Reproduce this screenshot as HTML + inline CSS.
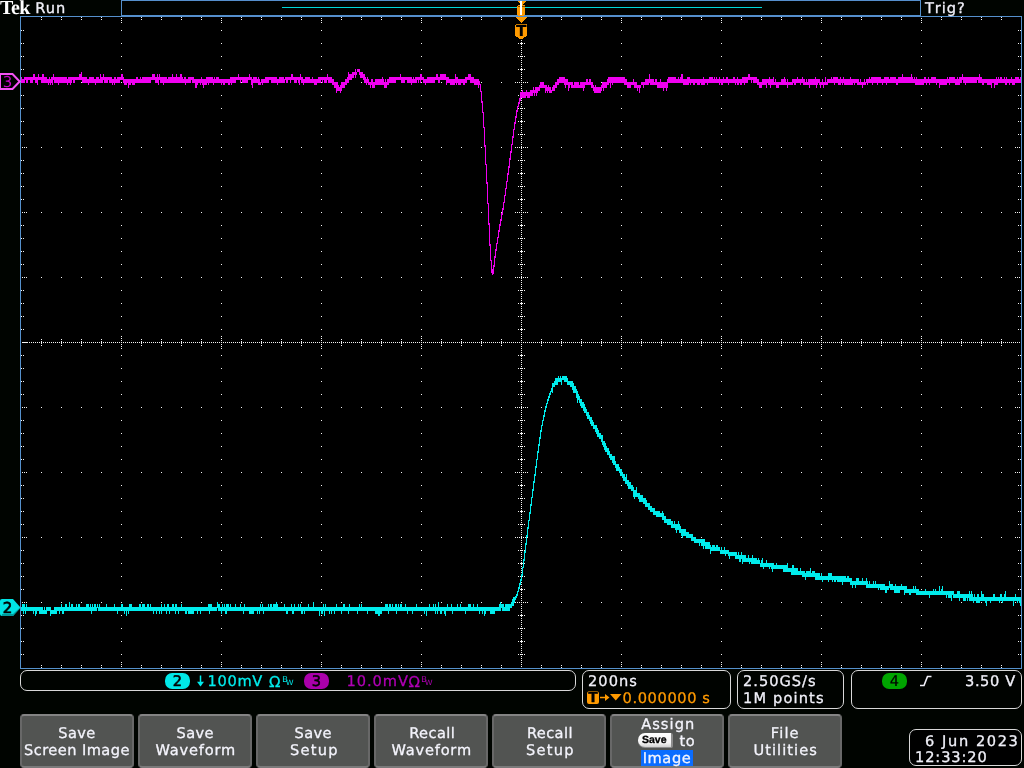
<!DOCTYPE html><html><head><meta charset="utf-8"><title>Tek scope</title><style>
html,body{margin:0;padding:0;background:#000400;}
body{width:1024px;height:768px;position:relative;overflow:hidden;font-family:"DejaVu Sans","Liberation Sans",sans-serif;font-size:14.6px;color:#f0f0f8;text-rendering:geometricPrecision;-webkit-text-stroke:.3px;}
.t{position:absolute;white-space:nowrap;line-height:18px;height:18px;margin-top:1px}
.box{position:absolute;border:1px solid #d8d8d8;border-radius:7px;box-sizing:border-box;background:#000300;}
.btn{position:absolute;top:714px;width:114px;height:54px;box-sizing:border-box;background:#525452;border:2px solid #686868;border-top-color:#848484;border-bottom-color:#7a7a7a;border-radius:4px;text-align:center;line-height:17px;padding-top:9px;color:#f4f4fc;letter-spacing:.6px}
.pill{-webkit-text-stroke:.55px;position:absolute;height:16px;border-radius:7.2px;text-align:center;font-size:14.6px;line-height:17px;color:#000;}
.bw{-webkit-text-stroke:0;position:absolute;font-size:8.5px;line-height:8px;font-family:"Liberation Sans","DejaVu Sans",sans-serif}
</style></head><body>
<div id="scr" style="position:absolute;left:0;top:0;width:1024px;height:768px;will-change:transform">
<svg width="1024" height="768" viewBox="0 0 1024 768" style="position:absolute;left:0;top:0">
<g shape-rendering="crispEdges">
<rect x="21" y="17" width="1000" height="651" fill="#000"/>
<rect x="122" y="1" width="798" height="14" fill="#000300"/>
<path d="M121.5 0V16M920.5 0V16M121 .5H921M20 16.5H1022M121 15.5H921M20.5 16V669M1021.5 16V669M20 668.5H1022" stroke="#5590cc" stroke-width="1" fill="none"/>
<path d="M282 7.5H762" stroke="#00d8d8" stroke-width="1"/>
<path d="M21 30h1M21 43h1M21 56h1M21 69h1M21 95h1M21 108h1M21 121h1M21 134h1M21 160h1M21 173h1M21 186h1M21 199h1M21 225h1M21 238h1M21 251h1M21 264h1M21 290h1M21 303h1M21 316h1M21 329h1M21 355h1M21 368h1M21 381h1M21 394h1M21 420h1M21 433h1M21 446h1M21 459h1M21 485h1M21 498h1M21 511h1M21 524h1M21 550h1M21 563h1M21 576h1M21 589h1M21 615h1M21 628h1M21 641h1M21 654h1M22 82h1M22 147h1M22 212h1M22 277h1M22 342h1M22 407h1M22 472h1M22 537h1M22 602h1M23 30h1M23 43h1M23 56h1M23 69h1M23 95h1M23 108h1M23 121h1M23 134h1M23 160h1M23 173h1M23 186h1M23 199h1M23 225h1M23 238h1M23 251h1M23 264h1M23 290h1M23 303h1M23 316h1M23 329h1M23 342h1M23 355h1M23 368h1M23 381h1M23 394h1M23 420h1M23 433h1M23 446h1M23 459h1M23 485h1M23 498h1M23 511h1M23 524h1M23 550h1M23 563h1M23 576h1M23 589h1M23 615h1M23 628h1M23 641h1M23 654h1M24 82h1M24 147h1M24 212h1M24 277h1M24 342h1M24 407h1M24 472h1M24 537h1M24 602h1M25 342h1M26 82h1M26 147h1M26 212h1M26 277h1M26 342h1M26 407h1M26 472h1M26 537h1M26 602h1M27 342h1M29 342h1M31 342h1M33 342h1M35 342h1M37 342h1M39 342h1M41 17h1M41 19h1M41 82h1M41 147h1M41 212h1M41 277h1M41 339h1M41 341h1M41 342h1M41 343h1M41 345h1M41 407h1M41 472h1M41 537h1M41 602h1M41 665h1M41 667h1M43 342h1M45 342h1M47 342h1M49 342h1M51 342h1M53 342h1M55 342h1M57 342h1M59 342h1M61 17h1M61 19h1M61 82h1M61 147h1M61 212h1M61 277h1M61 339h1M61 341h1M61 342h1M61 343h1M61 345h1M61 407h1M61 472h1M61 537h1M61 602h1M61 665h1M61 667h1M63 342h1M65 342h1M67 342h1M69 342h1M71 342h1M73 342h1M75 342h1M77 342h1M79 342h1M81 17h1M81 19h1M81 82h1M81 147h1M81 212h1M81 277h1M81 339h1M81 341h1M81 342h1M81 343h1M81 345h1M81 407h1M81 472h1M81 537h1M81 602h1M81 665h1M81 667h1M83 342h1M85 342h1M87 342h1M89 342h1M91 342h1M93 342h1M95 342h1M97 342h1M99 342h1M101 17h1M101 19h1M101 82h1M101 147h1M101 212h1M101 277h1M101 339h1M101 341h1M101 342h1M101 343h1M101 345h1M101 407h1M101 472h1M101 537h1M101 602h1M101 665h1M101 667h1M103 342h1M105 342h1M107 342h1M109 342h1M111 342h1M113 342h1M115 342h1M117 342h1M119 342h1M121 18h1M121 20h1M121 22h1M121 30h1M121 43h1M121 56h1M121 69h1M121 82h1M121 95h1M121 108h1M121 121h1M121 134h1M121 147h1M121 160h1M121 173h1M121 186h1M121 199h1M121 212h1M121 225h1M121 238h1M121 251h1M121 264h1M121 277h1M121 290h1M121 303h1M121 316h1M121 329h1M121 336h1M121 338h1M121 340h1M121 342h1M121 344h1M121 346h1M121 348h1M121 355h1M121 368h1M121 381h1M121 394h1M121 407h1M121 420h1M121 433h1M121 446h1M121 459h1M121 472h1M121 485h1M121 498h1M121 511h1M121 524h1M121 537h1M121 550h1M121 563h1M121 576h1M121 589h1M121 602h1M121 615h1M121 628h1M121 641h1M121 654h1M121 662h1M121 664h1M121 666h1M123 342h1M125 342h1M127 342h1M129 342h1M131 342h1M133 342h1M135 342h1M137 342h1M139 342h1M141 17h1M141 19h1M141 82h1M141 147h1M141 212h1M141 277h1M141 339h1M141 341h1M141 342h1M141 343h1M141 345h1M141 407h1M141 472h1M141 537h1M141 602h1M141 665h1M141 667h1M143 342h1M145 342h1M147 342h1M149 342h1M151 342h1M153 342h1M155 342h1M157 342h1M159 342h1M161 17h1M161 19h1M161 82h1M161 147h1M161 212h1M161 277h1M161 339h1M161 341h1M161 342h1M161 343h1M161 345h1M161 407h1M161 472h1M161 537h1M161 602h1M161 665h1M161 667h1M163 342h1M165 342h1M167 342h1M169 342h1M171 342h1M173 342h1M175 342h1M177 342h1M179 342h1M181 17h1M181 19h1M181 82h1M181 147h1M181 212h1M181 277h1M181 339h1M181 341h1M181 342h1M181 343h1M181 345h1M181 407h1M181 472h1M181 537h1M181 602h1M181 665h1M181 667h1M183 342h1M185 342h1M187 342h1M189 342h1M191 342h1M193 342h1M195 342h1M197 342h1M199 342h1M201 17h1M201 19h1M201 82h1M201 147h1M201 212h1M201 277h1M201 339h1M201 341h1M201 342h1M201 343h1M201 345h1M201 407h1M201 472h1M201 537h1M201 602h1M201 665h1M201 667h1M203 342h1M205 342h1M207 342h1M209 342h1M211 342h1M213 342h1M215 342h1M217 342h1M219 342h1M221 18h1M221 20h1M221 22h1M221 30h1M221 43h1M221 56h1M221 69h1M221 82h1M221 95h1M221 108h1M221 121h1M221 134h1M221 147h1M221 160h1M221 173h1M221 186h1M221 199h1M221 212h1M221 225h1M221 238h1M221 251h1M221 264h1M221 277h1M221 290h1M221 303h1M221 316h1M221 329h1M221 336h1M221 338h1M221 340h1M221 342h1M221 344h1M221 346h1M221 348h1M221 355h1M221 368h1M221 381h1M221 394h1M221 407h1M221 420h1M221 433h1M221 446h1M221 459h1M221 472h1M221 485h1M221 498h1M221 511h1M221 524h1M221 537h1M221 550h1M221 563h1M221 576h1M221 589h1M221 602h1M221 615h1M221 628h1M221 641h1M221 654h1M221 662h1M221 664h1M221 666h1M223 342h1M225 342h1M227 342h1M229 342h1M231 342h1M233 342h1M235 342h1M237 342h1M239 342h1M241 17h1M241 19h1M241 82h1M241 147h1M241 212h1M241 277h1M241 339h1M241 341h1M241 342h1M241 343h1M241 345h1M241 407h1M241 472h1M241 537h1M241 602h1M241 665h1M241 667h1M243 342h1M245 342h1M247 342h1M249 342h1M251 342h1M253 342h1M255 342h1M257 342h1M259 342h1M261 17h1M261 19h1M261 82h1M261 147h1M261 212h1M261 277h1M261 339h1M261 341h1M261 342h1M261 343h1M261 345h1M261 407h1M261 472h1M261 537h1M261 602h1M261 665h1M261 667h1M263 342h1M265 342h1M267 342h1M269 342h1M271 342h1M273 342h1M275 342h1M277 342h1M279 342h1M281 17h1M281 19h1M281 82h1M281 147h1M281 212h1M281 277h1M281 339h1M281 341h1M281 342h1M281 343h1M281 345h1M281 407h1M281 472h1M281 537h1M281 602h1M281 665h1M281 667h1M283 342h1M285 342h1M287 342h1M289 342h1M291 342h1M293 342h1M295 342h1M297 342h1M299 342h1M301 17h1M301 19h1M301 82h1M301 147h1M301 212h1M301 277h1M301 339h1M301 341h1M301 342h1M301 343h1M301 345h1M301 407h1M301 472h1M301 537h1M301 602h1M301 665h1M301 667h1M303 342h1M305 342h1M307 342h1M309 342h1M311 342h1M313 342h1M315 342h1M317 342h1M319 342h1M321 18h1M321 20h1M321 22h1M321 30h1M321 43h1M321 56h1M321 69h1M321 82h1M321 95h1M321 108h1M321 121h1M321 134h1M321 147h1M321 160h1M321 173h1M321 186h1M321 199h1M321 212h1M321 225h1M321 238h1M321 251h1M321 264h1M321 277h1M321 290h1M321 303h1M321 316h1M321 329h1M321 336h1M321 338h1M321 340h1M321 342h1M321 344h1M321 346h1M321 348h1M321 355h1M321 368h1M321 381h1M321 394h1M321 407h1M321 420h1M321 433h1M321 446h1M321 459h1M321 472h1M321 485h1M321 498h1M321 511h1M321 524h1M321 537h1M321 550h1M321 563h1M321 576h1M321 589h1M321 602h1M321 615h1M321 628h1M321 641h1M321 654h1M321 662h1M321 664h1M321 666h1M323 342h1M325 342h1M327 342h1M329 342h1M331 342h1M333 342h1M335 342h1M337 342h1M339 342h1M341 17h1M341 19h1M341 82h1M341 147h1M341 212h1M341 277h1M341 339h1M341 341h1M341 342h1M341 343h1M341 345h1M341 407h1M341 472h1M341 537h1M341 602h1M341 665h1M341 667h1M343 342h1M345 342h1M347 342h1M349 342h1M351 342h1M353 342h1M355 342h1M357 342h1M359 342h1M361 17h1M361 19h1M361 82h1M361 147h1M361 212h1M361 277h1M361 339h1M361 341h1M361 342h1M361 343h1M361 345h1M361 407h1M361 472h1M361 537h1M361 602h1M361 665h1M361 667h1M363 342h1M365 342h1M367 342h1M369 342h1M371 342h1M373 342h1M375 342h1M377 342h1M379 342h1M381 17h1M381 19h1M381 82h1M381 147h1M381 212h1M381 277h1M381 339h1M381 341h1M381 342h1M381 343h1M381 345h1M381 407h1M381 472h1M381 537h1M381 602h1M381 665h1M381 667h1M383 342h1M385 342h1M387 342h1M389 342h1M391 342h1M393 342h1M395 342h1M397 342h1M399 342h1M401 17h1M401 19h1M401 82h1M401 147h1M401 212h1M401 277h1M401 339h1M401 341h1M401 342h1M401 343h1M401 345h1M401 407h1M401 472h1M401 537h1M401 602h1M401 665h1M401 667h1M403 342h1M405 342h1M407 342h1M409 342h1M411 342h1M413 342h1M415 342h1M417 342h1M419 342h1M421 18h1M421 20h1M421 22h1M421 30h1M421 43h1M421 56h1M421 69h1M421 82h1M421 95h1M421 108h1M421 121h1M421 134h1M421 147h1M421 160h1M421 173h1M421 186h1M421 199h1M421 212h1M421 225h1M421 238h1M421 251h1M421 264h1M421 277h1M421 290h1M421 303h1M421 316h1M421 329h1M421 336h1M421 338h1M421 340h1M421 342h1M421 344h1M421 346h1M421 348h1M421 355h1M421 368h1M421 381h1M421 394h1M421 407h1M421 420h1M421 433h1M421 446h1M421 459h1M421 472h1M421 485h1M421 498h1M421 511h1M421 524h1M421 537h1M421 550h1M421 563h1M421 576h1M421 589h1M421 602h1M421 615h1M421 628h1M421 641h1M421 654h1M421 662h1M421 664h1M421 666h1M423 342h1M425 342h1M427 342h1M429 342h1M431 342h1M433 342h1M435 342h1M437 342h1M439 342h1M441 17h1M441 19h1M441 82h1M441 147h1M441 212h1M441 277h1M441 339h1M441 341h1M441 342h1M441 343h1M441 345h1M441 407h1M441 472h1M441 537h1M441 602h1M441 665h1M441 667h1M443 342h1M445 342h1M447 342h1M449 342h1M451 342h1M453 342h1M455 342h1M457 342h1M459 342h1M461 17h1M461 19h1M461 82h1M461 147h1M461 212h1M461 277h1M461 339h1M461 341h1M461 342h1M461 343h1M461 345h1M461 407h1M461 472h1M461 537h1M461 602h1M461 665h1M461 667h1M463 342h1M465 342h1M467 342h1M469 342h1M471 342h1M473 342h1M475 342h1M477 342h1M479 342h1M481 17h1M481 19h1M481 82h1M481 147h1M481 212h1M481 277h1M481 339h1M481 341h1M481 342h1M481 343h1M481 345h1M481 407h1M481 472h1M481 537h1M481 602h1M481 665h1M481 667h1M483 342h1M485 342h1M487 342h1M489 342h1M491 342h1M493 342h1M495 342h1M497 342h1M499 342h1M501 17h1M501 19h1M501 82h1M501 147h1M501 212h1M501 277h1M501 339h1M501 341h1M501 342h1M501 343h1M501 345h1M501 407h1M501 472h1M501 537h1M501 602h1M501 665h1M501 667h1M503 342h1M505 342h1M507 342h1M509 342h1M511 342h1M513 342h1M515 82h1M515 147h1M515 212h1M515 277h1M515 342h1M515 407h1M515 472h1M515 537h1M515 602h1M517 82h1M517 147h1M517 212h1M517 277h1M517 342h1M517 407h1M517 472h1M517 537h1M517 602h1M518 30h1M518 43h1M518 56h1M518 69h1M518 95h1M518 108h1M518 121h1M518 134h1M518 160h1M518 173h1M518 186h1M518 199h1M518 225h1M518 238h1M518 251h1M518 264h1M518 290h1M518 303h1M518 316h1M518 329h1M518 355h1M518 368h1M518 381h1M518 394h1M518 420h1M518 433h1M518 446h1M518 459h1M518 485h1M518 498h1M518 511h1M518 524h1M518 550h1M518 563h1M518 576h1M518 589h1M518 615h1M518 628h1M518 641h1M518 654h1M519 82h1M519 147h1M519 212h1M519 277h1M519 342h1M519 407h1M519 472h1M519 537h1M519 602h1M520 30h1M520 43h1M520 56h1M520 69h1M520 95h1M520 108h1M520 121h1M520 134h1M520 160h1M520 173h1M520 186h1M520 199h1M520 225h1M520 238h1M520 251h1M520 264h1M520 290h1M520 303h1M520 316h1M520 329h1M520 355h1M520 368h1M520 381h1M520 394h1M520 420h1M520 433h1M520 446h1M520 459h1M520 485h1M520 498h1M520 511h1M520 524h1M520 550h1M520 563h1M520 576h1M520 589h1M520 615h1M520 628h1M520 641h1M520 654h1M521 18h1M521 20h1M521 22h1M521 24h1M521 26h1M521 28h1M521 30h1M521 32h1M521 34h1M521 36h1M521 38h1M521 40h1M521 42h1M521 43h1M521 44h1M521 46h1M521 48h1M521 50h1M521 52h1M521 54h1M521 56h1M521 58h1M521 60h1M521 62h1M521 64h1M521 66h1M521 68h1M521 69h1M521 70h1M521 72h1M521 74h1M521 76h1M521 78h1M521 80h1M521 82h1M521 84h1M521 86h1M521 88h1M521 90h1M521 92h1M521 94h1M521 95h1M521 96h1M521 98h1M521 100h1M521 102h1M521 104h1M521 106h1M521 108h1M521 110h1M521 112h1M521 114h1M521 116h1M521 118h1M521 120h1M521 121h1M521 122h1M521 124h1M521 126h1M521 128h1M521 130h1M521 132h1M521 134h1M521 136h1M521 138h1M521 140h1M521 142h1M521 144h1M521 146h1M521 147h1M521 148h1M521 150h1M521 152h1M521 154h1M521 156h1M521 158h1M521 160h1M521 162h1M521 164h1M521 166h1M521 168h1M521 170h1M521 172h1M521 173h1M521 174h1M521 176h1M521 178h1M521 180h1M521 182h1M521 184h1M521 186h1M521 188h1M521 190h1M521 192h1M521 194h1M521 196h1M521 198h1M521 199h1M521 200h1M521 202h1M521 204h1M521 206h1M521 208h1M521 210h1M521 212h1M521 214h1M521 216h1M521 218h1M521 220h1M521 222h1M521 224h1M521 225h1M521 226h1M521 228h1M521 230h1M521 232h1M521 234h1M521 236h1M521 238h1M521 240h1M521 242h1M521 244h1M521 246h1M521 248h1M521 250h1M521 251h1M521 252h1M521 254h1M521 256h1M521 258h1M521 260h1M521 262h1M521 264h1M521 266h1M521 268h1M521 270h1M521 272h1M521 274h1M521 276h1M521 277h1M521 278h1M521 280h1M521 282h1M521 284h1M521 286h1M521 288h1M521 290h1M521 292h1M521 294h1M521 296h1M521 298h1M521 300h1M521 302h1M521 303h1M521 304h1M521 306h1M521 308h1M521 310h1M521 312h1M521 314h1M521 316h1M521 318h1M521 320h1M521 322h1M521 324h1M521 326h1M521 328h1M521 329h1M521 330h1M521 332h1M521 334h1M521 336h1M521 338h1M521 340h1M521 342h1M521 344h1M521 346h1M521 348h1M521 350h1M521 352h1M521 354h1M521 355h1M521 356h1M521 358h1M521 360h1M521 362h1M521 364h1M521 366h1M521 368h1M521 370h1M521 372h1M521 374h1M521 376h1M521 378h1M521 380h1M521 381h1M521 382h1M521 384h1M521 386h1M521 388h1M521 390h1M521 392h1M521 394h1M521 396h1M521 398h1M521 400h1M521 402h1M521 404h1M521 406h1M521 407h1M521 408h1M521 410h1M521 412h1M521 414h1M521 416h1M521 418h1M521 420h1M521 422h1M521 424h1M521 426h1M521 428h1M521 430h1M521 432h1M521 433h1M521 434h1M521 436h1M521 438h1M521 440h1M521 442h1M521 444h1M521 446h1M521 448h1M521 450h1M521 452h1M521 454h1M521 456h1M521 458h1M521 459h1M521 460h1M521 462h1M521 464h1M521 466h1M521 468h1M521 470h1M521 472h1M521 474h1M521 476h1M521 478h1M521 480h1M521 482h1M521 484h1M521 485h1M521 486h1M521 488h1M521 490h1M521 492h1M521 494h1M521 496h1M521 498h1M521 500h1M521 502h1M521 504h1M521 506h1M521 508h1M521 510h1M521 511h1M521 512h1M521 514h1M521 516h1M521 518h1M521 520h1M521 522h1M521 524h1M521 526h1M521 528h1M521 530h1M521 532h1M521 534h1M521 536h1M521 537h1M521 538h1M521 540h1M521 542h1M521 544h1M521 546h1M521 548h1M521 550h1M521 552h1M521 554h1M521 556h1M521 558h1M521 560h1M521 562h1M521 563h1M521 564h1M521 566h1M521 568h1M521 570h1M521 572h1M521 574h1M521 576h1M521 578h1M521 580h1M521 582h1M521 584h1M521 586h1M521 588h1M521 589h1M521 590h1M521 592h1M521 594h1M521 596h1M521 598h1M521 600h1M521 602h1M521 604h1M521 606h1M521 608h1M521 610h1M521 612h1M521 614h1M521 615h1M521 616h1M521 618h1M521 620h1M521 622h1M521 624h1M521 626h1M521 628h1M521 630h1M521 632h1M521 634h1M521 636h1M521 638h1M521 640h1M521 641h1M521 642h1M521 644h1M521 646h1M521 648h1M521 650h1M521 652h1M521 654h1M521 656h1M521 658h1M521 660h1M521 662h1M521 664h1M521 666h1M522 30h1M522 43h1M522 56h1M522 69h1M522 95h1M522 108h1M522 121h1M522 134h1M522 160h1M522 173h1M522 186h1M522 199h1M522 225h1M522 238h1M522 251h1M522 264h1M522 290h1M522 303h1M522 316h1M522 329h1M522 355h1M522 368h1M522 381h1M522 394h1M522 420h1M522 433h1M522 446h1M522 459h1M522 485h1M522 498h1M522 511h1M522 524h1M522 550h1M522 563h1M522 576h1M522 589h1M522 615h1M522 628h1M522 641h1M522 654h1M523 82h1M523 147h1M523 212h1M523 277h1M523 342h1M523 407h1M523 472h1M523 537h1M523 602h1M524 30h1M524 43h1M524 56h1M524 69h1M524 95h1M524 108h1M524 121h1M524 134h1M524 160h1M524 173h1M524 186h1M524 199h1M524 225h1M524 238h1M524 251h1M524 264h1M524 290h1M524 303h1M524 316h1M524 329h1M524 355h1M524 368h1M524 381h1M524 394h1M524 420h1M524 433h1M524 446h1M524 459h1M524 485h1M524 498h1M524 511h1M524 524h1M524 550h1M524 563h1M524 576h1M524 589h1M524 615h1M524 628h1M524 641h1M524 654h1M525 82h1M525 147h1M525 212h1M525 277h1M525 342h1M525 407h1M525 472h1M525 537h1M525 602h1M527 82h1M527 147h1M527 212h1M527 277h1M527 342h1M527 407h1M527 472h1M527 537h1M527 602h1M529 342h1M531 342h1M533 342h1M535 342h1M537 342h1M539 342h1M541 17h1M541 19h1M541 82h1M541 147h1M541 212h1M541 277h1M541 339h1M541 341h1M541 342h1M541 343h1M541 345h1M541 407h1M541 472h1M541 537h1M541 602h1M541 665h1M541 667h1M543 342h1M545 342h1M547 342h1M549 342h1M551 342h1M553 342h1M555 342h1M557 342h1M559 342h1M561 17h1M561 19h1M561 82h1M561 147h1M561 212h1M561 277h1M561 339h1M561 341h1M561 342h1M561 343h1M561 345h1M561 407h1M561 472h1M561 537h1M561 602h1M561 665h1M561 667h1M563 342h1M565 342h1M567 342h1M569 342h1M571 342h1M573 342h1M575 342h1M577 342h1M579 342h1M581 17h1M581 19h1M581 82h1M581 147h1M581 212h1M581 277h1M581 339h1M581 341h1M581 342h1M581 343h1M581 345h1M581 407h1M581 472h1M581 537h1M581 602h1M581 665h1M581 667h1M583 342h1M585 342h1M587 342h1M589 342h1M591 342h1M593 342h1M595 342h1M597 342h1M599 342h1M601 17h1M601 19h1M601 82h1M601 147h1M601 212h1M601 277h1M601 339h1M601 341h1M601 342h1M601 343h1M601 345h1M601 407h1M601 472h1M601 537h1M601 602h1M601 665h1M601 667h1M603 342h1M605 342h1M607 342h1M609 342h1M611 342h1M613 342h1M615 342h1M617 342h1M619 342h1M621 18h1M621 20h1M621 22h1M621 30h1M621 43h1M621 56h1M621 69h1M621 82h1M621 95h1M621 108h1M621 121h1M621 134h1M621 147h1M621 160h1M621 173h1M621 186h1M621 199h1M621 212h1M621 225h1M621 238h1M621 251h1M621 264h1M621 277h1M621 290h1M621 303h1M621 316h1M621 329h1M621 336h1M621 338h1M621 340h1M621 342h1M621 344h1M621 346h1M621 348h1M621 355h1M621 368h1M621 381h1M621 394h1M621 407h1M621 420h1M621 433h1M621 446h1M621 459h1M621 472h1M621 485h1M621 498h1M621 511h1M621 524h1M621 537h1M621 550h1M621 563h1M621 576h1M621 589h1M621 602h1M621 615h1M621 628h1M621 641h1M621 654h1M621 662h1M621 664h1M621 666h1M623 342h1M625 342h1M627 342h1M629 342h1M631 342h1M633 342h1M635 342h1M637 342h1M639 342h1M641 17h1M641 19h1M641 82h1M641 147h1M641 212h1M641 277h1M641 339h1M641 341h1M641 342h1M641 343h1M641 345h1M641 407h1M641 472h1M641 537h1M641 602h1M641 665h1M641 667h1M643 342h1M645 342h1M647 342h1M649 342h1M651 342h1M653 342h1M655 342h1M657 342h1M659 342h1M661 17h1M661 19h1M661 82h1M661 147h1M661 212h1M661 277h1M661 339h1M661 341h1M661 342h1M661 343h1M661 345h1M661 407h1M661 472h1M661 537h1M661 602h1M661 665h1M661 667h1M663 342h1M665 342h1M667 342h1M669 342h1M671 342h1M673 342h1M675 342h1M677 342h1M679 342h1M681 17h1M681 19h1M681 82h1M681 147h1M681 212h1M681 277h1M681 339h1M681 341h1M681 342h1M681 343h1M681 345h1M681 407h1M681 472h1M681 537h1M681 602h1M681 665h1M681 667h1M683 342h1M685 342h1M687 342h1M689 342h1M691 342h1M693 342h1M695 342h1M697 342h1M699 342h1M701 17h1M701 19h1M701 82h1M701 147h1M701 212h1M701 277h1M701 339h1M701 341h1M701 342h1M701 343h1M701 345h1M701 407h1M701 472h1M701 537h1M701 602h1M701 665h1M701 667h1M703 342h1M705 342h1M707 342h1M709 342h1M711 342h1M713 342h1M715 342h1M717 342h1M719 342h1M721 18h1M721 20h1M721 22h1M721 30h1M721 43h1M721 56h1M721 69h1M721 82h1M721 95h1M721 108h1M721 121h1M721 134h1M721 147h1M721 160h1M721 173h1M721 186h1M721 199h1M721 212h1M721 225h1M721 238h1M721 251h1M721 264h1M721 277h1M721 290h1M721 303h1M721 316h1M721 329h1M721 336h1M721 338h1M721 340h1M721 342h1M721 344h1M721 346h1M721 348h1M721 355h1M721 368h1M721 381h1M721 394h1M721 407h1M721 420h1M721 433h1M721 446h1M721 459h1M721 472h1M721 485h1M721 498h1M721 511h1M721 524h1M721 537h1M721 550h1M721 563h1M721 576h1M721 589h1M721 602h1M721 615h1M721 628h1M721 641h1M721 654h1M721 662h1M721 664h1M721 666h1M723 342h1M725 342h1M727 342h1M729 342h1M731 342h1M733 342h1M735 342h1M737 342h1M739 342h1M741 17h1M741 19h1M741 82h1M741 147h1M741 212h1M741 277h1M741 339h1M741 341h1M741 342h1M741 343h1M741 345h1M741 407h1M741 472h1M741 537h1M741 602h1M741 665h1M741 667h1M743 342h1M745 342h1M747 342h1M749 342h1M751 342h1M753 342h1M755 342h1M757 342h1M759 342h1M761 17h1M761 19h1M761 82h1M761 147h1M761 212h1M761 277h1M761 339h1M761 341h1M761 342h1M761 343h1M761 345h1M761 407h1M761 472h1M761 537h1M761 602h1M761 665h1M761 667h1M763 342h1M765 342h1M767 342h1M769 342h1M771 342h1M773 342h1M775 342h1M777 342h1M779 342h1M781 17h1M781 19h1M781 82h1M781 147h1M781 212h1M781 277h1M781 339h1M781 341h1M781 342h1M781 343h1M781 345h1M781 407h1M781 472h1M781 537h1M781 602h1M781 665h1M781 667h1M783 342h1M785 342h1M787 342h1M789 342h1M791 342h1M793 342h1M795 342h1M797 342h1M799 342h1M801 17h1M801 19h1M801 82h1M801 147h1M801 212h1M801 277h1M801 339h1M801 341h1M801 342h1M801 343h1M801 345h1M801 407h1M801 472h1M801 537h1M801 602h1M801 665h1M801 667h1M803 342h1M805 342h1M807 342h1M809 342h1M811 342h1M813 342h1M815 342h1M817 342h1M819 342h1M821 18h1M821 20h1M821 22h1M821 30h1M821 43h1M821 56h1M821 69h1M821 82h1M821 95h1M821 108h1M821 121h1M821 134h1M821 147h1M821 160h1M821 173h1M821 186h1M821 199h1M821 212h1M821 225h1M821 238h1M821 251h1M821 264h1M821 277h1M821 290h1M821 303h1M821 316h1M821 329h1M821 336h1M821 338h1M821 340h1M821 342h1M821 344h1M821 346h1M821 348h1M821 355h1M821 368h1M821 381h1M821 394h1M821 407h1M821 420h1M821 433h1M821 446h1M821 459h1M821 472h1M821 485h1M821 498h1M821 511h1M821 524h1M821 537h1M821 550h1M821 563h1M821 576h1M821 589h1M821 602h1M821 615h1M821 628h1M821 641h1M821 654h1M821 662h1M821 664h1M821 666h1M823 342h1M825 342h1M827 342h1M829 342h1M831 342h1M833 342h1M835 342h1M837 342h1M839 342h1M841 17h1M841 19h1M841 82h1M841 147h1M841 212h1M841 277h1M841 339h1M841 341h1M841 342h1M841 343h1M841 345h1M841 407h1M841 472h1M841 537h1M841 602h1M841 665h1M841 667h1M843 342h1M845 342h1M847 342h1M849 342h1M851 342h1M853 342h1M855 342h1M857 342h1M859 342h1M861 17h1M861 19h1M861 82h1M861 147h1M861 212h1M861 277h1M861 339h1M861 341h1M861 342h1M861 343h1M861 345h1M861 407h1M861 472h1M861 537h1M861 602h1M861 665h1M861 667h1M863 342h1M865 342h1M867 342h1M869 342h1M871 342h1M873 342h1M875 342h1M877 342h1M879 342h1M881 17h1M881 19h1M881 82h1M881 147h1M881 212h1M881 277h1M881 339h1M881 341h1M881 342h1M881 343h1M881 345h1M881 407h1M881 472h1M881 537h1M881 602h1M881 665h1M881 667h1M883 342h1M885 342h1M887 342h1M889 342h1M891 342h1M893 342h1M895 342h1M897 342h1M899 342h1M901 17h1M901 19h1M901 82h1M901 147h1M901 212h1M901 277h1M901 339h1M901 341h1M901 342h1M901 343h1M901 345h1M901 407h1M901 472h1M901 537h1M901 602h1M901 665h1M901 667h1M903 342h1M905 342h1M907 342h1M909 342h1M911 342h1M913 342h1M915 342h1M917 342h1M919 342h1M921 18h1M921 20h1M921 22h1M921 30h1M921 43h1M921 56h1M921 69h1M921 82h1M921 95h1M921 108h1M921 121h1M921 134h1M921 147h1M921 160h1M921 173h1M921 186h1M921 199h1M921 212h1M921 225h1M921 238h1M921 251h1M921 264h1M921 277h1M921 290h1M921 303h1M921 316h1M921 329h1M921 336h1M921 338h1M921 340h1M921 342h1M921 344h1M921 346h1M921 348h1M921 355h1M921 368h1M921 381h1M921 394h1M921 407h1M921 420h1M921 433h1M921 446h1M921 459h1M921 472h1M921 485h1M921 498h1M921 511h1M921 524h1M921 537h1M921 550h1M921 563h1M921 576h1M921 589h1M921 602h1M921 615h1M921 628h1M921 641h1M921 654h1M921 662h1M921 664h1M921 666h1M923 342h1M925 342h1M927 342h1M929 342h1M931 342h1M933 342h1M935 342h1M937 342h1M939 342h1M941 17h1M941 19h1M941 82h1M941 147h1M941 212h1M941 277h1M941 339h1M941 341h1M941 342h1M941 343h1M941 345h1M941 407h1M941 472h1M941 537h1M941 602h1M941 665h1M941 667h1M943 342h1M945 342h1M947 342h1M949 342h1M951 342h1M953 342h1M955 342h1M957 342h1M959 342h1M961 17h1M961 19h1M961 82h1M961 147h1M961 212h1M961 277h1M961 339h1M961 341h1M961 342h1M961 343h1M961 345h1M961 407h1M961 472h1M961 537h1M961 602h1M961 665h1M961 667h1M963 342h1M965 342h1M967 342h1M969 342h1M971 342h1M973 342h1M975 342h1M977 342h1M979 342h1M981 17h1M981 19h1M981 82h1M981 147h1M981 212h1M981 277h1M981 339h1M981 341h1M981 342h1M981 343h1M981 345h1M981 407h1M981 472h1M981 537h1M981 602h1M981 665h1M981 667h1M983 342h1M985 342h1M987 342h1M989 342h1M991 342h1M993 342h1M995 342h1M997 342h1M999 342h1M1001 17h1M1001 19h1M1001 82h1M1001 147h1M1001 212h1M1001 277h1M1001 339h1M1001 341h1M1001 342h1M1001 343h1M1001 345h1M1001 407h1M1001 472h1M1001 537h1M1001 602h1M1001 665h1M1001 667h1M1003 342h1M1005 342h1M1007 342h1M1009 342h1M1011 342h1M1013 342h1M1015 82h1M1015 147h1M1015 212h1M1015 277h1M1015 342h1M1015 407h1M1015 472h1M1015 537h1M1015 602h1M1017 82h1M1017 147h1M1017 212h1M1017 277h1M1017 342h1M1017 407h1M1017 472h1M1017 537h1M1017 602h1M1018 30h1M1018 43h1M1018 56h1M1018 69h1M1018 95h1M1018 108h1M1018 121h1M1018 134h1M1018 160h1M1018 173h1M1018 186h1M1018 199h1M1018 225h1M1018 238h1M1018 251h1M1018 264h1M1018 290h1M1018 303h1M1018 316h1M1018 329h1M1018 355h1M1018 368h1M1018 381h1M1018 394h1M1018 420h1M1018 433h1M1018 446h1M1018 459h1M1018 485h1M1018 498h1M1018 511h1M1018 524h1M1018 550h1M1018 563h1M1018 576h1M1018 589h1M1018 615h1M1018 628h1M1018 641h1M1018 654h1M1019 82h1M1019 147h1M1019 212h1M1019 277h1M1019 342h1M1019 407h1M1019 472h1M1019 537h1M1019 602h1M1020 30h1M1020 43h1M1020 56h1M1020 69h1M1020 95h1M1020 108h1M1020 121h1M1020 134h1M1020 160h1M1020 173h1M1020 186h1M1020 199h1M1020 225h1M1020 238h1M1020 251h1M1020 264h1M1020 290h1M1020 303h1M1020 316h1M1020 329h1M1020 355h1M1020 368h1M1020 381h1M1020 394h1M1020 420h1M1020 433h1M1020 446h1M1020 459h1M1020 485h1M1020 498h1M1020 511h1M1020 524h1M1020 550h1M1020 563h1M1020 576h1M1020 589h1M1020 615h1M1020 628h1M1020 641h1M1020 654h1" stroke="#f4f4f4" stroke-width="1" fill="none" transform="translate(0,0.5)"/>
<path d="M21 77h1v6h-1zM22 79h1v4h-1zM23 79h1v4h-1zM24 77h1v6h-1zM25 77h1v3h-1zM26 77h1v6h-1zM27 77h1v6h-1zM28 77h1v3h-1zM29 77h1v3h-1zM30 77h1v6h-1zM31 77h1v6h-1zM32 77h1v6h-1zM33 74h1v6h-1zM34 74h1v6h-1zM35 77h1v6h-1zM36 77h1v6h-1zM37 77h1v8h-1zM38 74h1v6h-1zM39 77h1v3h-1zM40 77h1v3h-1zM41 77h1v6h-1zM42 74h1v9h-1zM43 74h1v9h-1zM44 77h1v6h-1zM45 77h1v6h-1zM46 77h1v6h-1zM47 79h1v4h-1zM48 79h1v6h-1zM49 77h1v6h-1zM50 79h1v6h-1zM51 77h1v6h-1zM52 77h1v8h-1zM53 74h1v6h-1zM54 77h1v6h-1zM55 77h1v6h-1zM56 77h1v6h-1zM57 77h1v6h-1zM58 77h1v8h-1zM59 77h1v6h-1zM60 77h1v6h-1zM61 77h1v6h-1zM62 77h1v6h-1zM63 77h1v6h-1zM64 77h1v6h-1zM65 77h1v6h-1zM66 77h1v6h-1zM67 79h1v6h-1zM68 77h1v6h-1zM69 77h1v6h-1zM70 77h1v8h-1zM71 77h1v6h-1zM72 77h1v3h-1zM73 77h1v6h-1zM74 77h1v6h-1zM75 77h1v3h-1zM76 77h1v3h-1zM77 77h1v3h-1zM78 77h1v3h-1zM79 74h1v6h-1zM80 74h1v6h-1zM81 72h1v8h-1zM82 77h1v6h-1zM83 77h1v6h-1zM84 77h1v6h-1zM85 77h1v6h-1zM86 77h1v6h-1zM87 79h1v4h-1zM88 79h1v6h-1zM89 77h1v6h-1zM90 77h1v6h-1zM91 77h1v6h-1zM92 77h1v6h-1zM93 77h1v6h-1zM94 79h1v4h-1zM95 79h1v6h-1zM96 77h1v6h-1zM97 77h1v6h-1zM98 77h1v6h-1zM99 79h1v4h-1zM100 74h1v9h-1zM101 77h1v6h-1zM102 77h1v6h-1zM103 74h1v6h-1zM104 77h1v6h-1zM105 77h1v6h-1zM106 77h1v6h-1zM107 77h1v6h-1zM108 77h1v3h-1zM109 77h1v6h-1zM110 77h1v6h-1zM111 77h1v6h-1zM112 79h1v6h-1zM113 79h1v4h-1zM114 77h1v8h-1zM115 77h1v6h-1zM116 79h1v4h-1zM117 77h1v6h-1zM118 77h1v6h-1zM119 77h1v6h-1zM120 77h1v3h-1zM121 74h1v6h-1zM122 74h1v6h-1zM123 77h1v6h-1zM124 79h1v6h-1zM125 79h1v6h-1zM126 79h1v6h-1zM127 79h1v4h-1zM128 79h1v9h-1zM129 79h1v6h-1zM130 79h1v6h-1zM131 79h1v4h-1zM132 79h1v6h-1zM133 79h1v6h-1zM134 79h1v6h-1zM135 79h1v4h-1zM136 77h1v6h-1zM137 77h1v6h-1zM138 79h1v4h-1zM139 79h1v4h-1zM140 77h1v6h-1zM141 79h1v4h-1zM142 77h1v6h-1zM143 77h1v6h-1zM144 77h1v6h-1zM145 77h1v6h-1zM146 77h1v6h-1zM147 77h1v6h-1zM148 77h1v6h-1zM149 77h1v6h-1zM150 77h1v6h-1zM151 77h1v3h-1zM152 74h1v6h-1zM153 74h1v6h-1zM154 74h1v6h-1zM155 77h1v6h-1zM156 77h1v6h-1zM157 74h1v9h-1zM158 77h1v8h-1zM159 74h1v6h-1zM160 77h1v6h-1zM161 77h1v6h-1zM162 77h1v6h-1zM163 77h1v8h-1zM164 77h1v6h-1zM165 77h1v6h-1zM166 77h1v6h-1zM167 79h1v4h-1zM168 77h1v6h-1zM169 77h1v6h-1zM170 77h1v6h-1zM171 77h1v6h-1zM172 74h1v9h-1zM173 77h1v6h-1zM174 77h1v6h-1zM175 77h1v6h-1zM176 74h1v9h-1zM177 77h1v6h-1zM178 77h1v6h-1zM179 77h1v6h-1zM180 74h1v9h-1zM181 74h1v9h-1zM182 77h1v6h-1zM183 79h1v4h-1zM184 77h1v6h-1zM185 77h1v8h-1zM186 79h1v4h-1zM187 79h1v4h-1zM188 77h1v6h-1zM189 77h1v6h-1zM190 77h1v6h-1zM191 77h1v3h-1zM192 77h1v6h-1zM193 77h1v6h-1zM194 79h1v4h-1zM195 79h1v9h-1zM196 79h1v9h-1zM197 79h1v6h-1zM198 79h1v4h-1zM199 79h1v4h-1zM200 79h1v6h-1zM201 77h1v6h-1zM202 79h1v6h-1zM203 79h1v9h-1zM204 79h1v6h-1zM205 79h1v6h-1zM206 77h1v8h-1zM207 77h1v6h-1zM208 77h1v8h-1zM209 77h1v6h-1zM210 77h1v6h-1zM211 77h1v6h-1zM212 77h1v6h-1zM213 79h1v6h-1zM214 77h1v6h-1zM215 79h1v4h-1zM216 77h1v6h-1zM217 77h1v6h-1zM218 77h1v6h-1zM219 79h1v4h-1zM220 79h1v4h-1zM221 79h1v6h-1zM222 79h1v4h-1zM223 79h1v6h-1zM224 79h1v6h-1zM225 79h1v4h-1zM226 79h1v4h-1zM227 79h1v4h-1zM228 79h1v6h-1zM229 79h1v6h-1zM230 77h1v6h-1zM231 77h1v8h-1zM232 77h1v6h-1zM233 77h1v6h-1zM234 77h1v6h-1zM235 77h1v6h-1zM236 77h1v3h-1zM237 77h1v3h-1zM238 74h1v6h-1zM239 77h1v3h-1zM240 77h1v6h-1zM241 77h1v3h-1zM242 77h1v6h-1zM243 77h1v6h-1zM244 77h1v6h-1zM245 77h1v6h-1zM246 77h1v6h-1zM247 77h1v6h-1zM248 77h1v3h-1zM249 74h1v6h-1zM250 77h1v3h-1zM251 77h1v8h-1zM252 79h1v9h-1zM253 77h1v6h-1zM254 77h1v6h-1zM255 77h1v6h-1zM256 77h1v6h-1zM257 79h1v4h-1zM258 77h1v8h-1zM259 79h1v6h-1zM260 82h1v3h-1zM261 79h1v4h-1zM262 79h1v6h-1zM263 79h1v4h-1zM264 79h1v4h-1zM265 77h1v6h-1zM266 77h1v6h-1zM267 77h1v6h-1zM268 77h1v6h-1zM269 77h1v3h-1zM270 77h1v3h-1zM271 77h1v6h-1zM272 77h1v6h-1zM273 77h1v6h-1zM274 77h1v6h-1zM275 77h1v6h-1zM276 77h1v6h-1zM277 79h1v6h-1zM278 79h1v4h-1zM279 77h1v6h-1zM280 77h1v6h-1zM281 77h1v6h-1zM282 77h1v6h-1zM283 77h1v6h-1zM284 79h1v4h-1zM285 77h1v3h-1zM286 77h1v6h-1zM287 77h1v6h-1zM288 77h1v3h-1zM289 77h1v3h-1zM290 77h1v6h-1zM291 74h1v6h-1zM292 74h1v6h-1zM293 77h1v3h-1zM294 77h1v6h-1zM295 77h1v6h-1zM296 77h1v6h-1zM297 77h1v3h-1zM298 77h1v6h-1zM299 77h1v8h-1zM300 74h1v6h-1zM301 77h1v6h-1zM302 77h1v6h-1zM303 79h1v6h-1zM304 79h1v4h-1zM305 77h1v6h-1zM306 77h1v6h-1zM307 77h1v6h-1zM308 77h1v6h-1zM309 77h1v6h-1zM310 79h1v4h-1zM311 79h1v4h-1zM312 77h1v6h-1zM313 79h1v4h-1zM314 79h1v6h-1zM315 79h1v6h-1zM316 79h1v6h-1zM317 79h1v4h-1zM318 77h1v6h-1zM319 77h1v6h-1zM320 77h1v6h-1zM321 77h1v3h-1zM322 77h1v6h-1zM323 77h1v3h-1zM324 77h1v6h-1zM325 77h1v6h-1zM326 77h1v6h-1zM327 74h1v6h-1zM328 77h1v6h-1zM329 77h1v6h-1zM330 77h1v6h-1zM331 77h1v6h-1zM332 79h1v6h-1zM333 79h1v6h-1zM334 82h1v6h-1zM335 82h1v6h-1zM336 82h1v11h-1zM337 82h1v9h-1zM338 85h1v6h-1zM339 87h1v4h-1zM340 85h1v8h-1zM341 82h1v9h-1zM342 82h1v6h-1zM343 82h1v6h-1zM344 82h1v6h-1zM345 79h1v6h-1zM346 79h1v6h-1zM347 77h1v6h-1zM348 72h1v11h-1zM349 74h1v6h-1zM350 74h1v6h-1zM351 74h1v6h-1zM352 72h1v6h-1zM353 72h1v6h-1zM354 72h1v3h-1zM355 69h1v9h-1zM356 72h1v3h-1zM357 69h1v3h-1zM358 69h1v3h-1zM359 69h1v6h-1zM360 72h1v6h-1zM361 72h1v6h-1zM362 72h1v6h-1zM363 74h1v6h-1zM364 74h1v9h-1zM365 77h1v6h-1zM366 79h1v6h-1zM367 77h1v6h-1zM368 79h1v6h-1zM369 82h1v3h-1zM370 82h1v6h-1zM371 79h1v6h-1zM372 79h1v9h-1zM373 82h1v6h-1zM374 82h1v6h-1zM375 79h1v6h-1zM376 79h1v6h-1zM377 79h1v6h-1zM378 79h1v6h-1zM379 79h1v6h-1zM380 79h1v6h-1zM381 79h1v6h-1zM382 77h1v8h-1zM383 79h1v6h-1zM384 82h1v6h-1zM385 79h1v9h-1zM386 82h1v6h-1zM387 79h1v6h-1zM388 79h1v6h-1zM389 77h1v6h-1zM390 77h1v6h-1zM391 77h1v6h-1zM392 77h1v6h-1zM393 77h1v6h-1zM394 77h1v6h-1zM395 77h1v6h-1zM396 77h1v3h-1zM397 77h1v3h-1zM398 77h1v3h-1zM399 77h1v3h-1zM400 74h1v6h-1zM401 77h1v6h-1zM402 77h1v6h-1zM403 77h1v6h-1zM404 77h1v6h-1zM405 77h1v3h-1zM406 77h1v3h-1zM407 77h1v6h-1zM408 77h1v6h-1zM409 77h1v6h-1zM410 77h1v6h-1zM411 77h1v8h-1zM412 79h1v4h-1zM413 77h1v6h-1zM414 79h1v4h-1zM415 77h1v6h-1zM416 77h1v6h-1zM417 77h1v3h-1zM418 77h1v6h-1zM419 77h1v3h-1zM420 74h1v9h-1zM421 74h1v6h-1zM422 77h1v3h-1zM423 77h1v6h-1zM424 79h1v4h-1zM425 79h1v6h-1zM426 79h1v4h-1zM427 77h1v6h-1zM428 77h1v6h-1zM429 77h1v6h-1zM430 77h1v6h-1zM431 77h1v6h-1zM432 77h1v6h-1zM433 77h1v6h-1zM434 77h1v6h-1zM435 77h1v3h-1zM436 74h1v6h-1zM437 74h1v6h-1zM438 77h1v6h-1zM439 77h1v6h-1zM440 74h1v6h-1zM441 74h1v6h-1zM442 74h1v6h-1zM443 74h1v6h-1zM444 74h1v6h-1zM445 74h1v6h-1zM446 77h1v8h-1zM447 77h1v6h-1zM448 77h1v6h-1zM449 79h1v4h-1zM450 79h1v6h-1zM451 79h1v6h-1zM452 79h1v6h-1zM453 79h1v6h-1zM454 79h1v6h-1zM455 74h1v9h-1zM456 77h1v8h-1zM457 77h1v6h-1zM458 79h1v6h-1zM459 79h1v6h-1zM460 79h1v6h-1zM461 79h1v4h-1zM462 79h1v4h-1zM463 79h1v6h-1zM464 79h1v6h-1zM465 77h1v6h-1zM466 77h1v6h-1zM467 77h1v3h-1zM468 74h1v6h-1zM469 74h1v6h-1zM470 74h1v9h-1zM471 77h1v6h-1zM472 77h1v6h-1zM473 77h1v6h-1zM474 79h1v6h-1zM475 79h1v6h-1zM476 79h1v6h-1zM477 79h1v6h-1zM478 79h1v9h-1zM479 81h1v4h-1zM480 84h1v8h-1zM481 91h1v12h-1zM482 101h1v12h-1zM483 112h1v16h-1zM484 127h1v20h-1zM485 145h1v20h-1zM486 164h1v20h-1zM487 182h1v22h-1zM488 203h1v22h-1zM489 223h1v23h-1zM490 244h1v17h-1zM491 260h1v13h-1zM492 269h1v6h-1zM493 265h1v9h-1zM494 256h1v11h-1zM495 249h1v9h-1zM496 243h1v8h-1zM497 237h1v7h-1zM498 230h1v8h-1zM499 224h1v8h-1zM500 219h1v7h-1zM501 213h1v8h-1zM502 208h1v7h-1zM503 202h1v8h-1zM504 195h1v8h-1zM505 188h1v8h-1zM506 181h1v8h-1zM507 173h1v9h-1zM508 166h1v9h-1zM509 158h1v10h-1zM510 151h1v9h-1zM511 144h1v9h-1zM512 136h1v9h-1zM513 129h1v9h-1zM514 122h1v8h-1zM515 116h1v8h-1zM516 110h1v8h-1zM517 106h1v6h-1zM518 102h1v5h-1zM519 98h1v6h-1zM520 92h1v9h-1zM521 92h1v6h-1zM522 90h1v8h-1zM523 92h1v6h-1zM524 92h1v6h-1zM525 92h1v6h-1zM526 90h1v6h-1zM527 92h1v6h-1zM528 92h1v6h-1zM529 92h1v6h-1zM530 90h1v6h-1zM531 90h1v6h-1zM532 90h1v6h-1zM533 87h1v6h-1zM534 90h1v6h-1zM535 87h1v6h-1zM536 87h1v9h-1zM537 87h1v6h-1zM538 87h1v4h-1zM539 85h1v6h-1zM540 82h1v6h-1zM541 82h1v6h-1zM542 82h1v6h-1zM543 82h1v6h-1zM544 85h1v3h-1zM545 85h1v8h-1zM546 85h1v6h-1zM547 87h1v6h-1zM548 85h1v6h-1zM549 87h1v6h-1zM550 87h1v6h-1zM551 90h1v3h-1zM552 87h1v4h-1zM553 85h1v6h-1zM554 85h1v6h-1zM555 82h1v6h-1zM556 82h1v6h-1zM557 79h1v6h-1zM558 79h1v6h-1zM559 77h1v6h-1zM560 77h1v6h-1zM561 77h1v6h-1zM562 77h1v6h-1zM563 77h1v6h-1zM564 77h1v8h-1zM565 79h1v9h-1zM566 79h1v6h-1zM567 79h1v6h-1zM568 82h1v9h-1zM569 82h1v6h-1zM570 82h1v3h-1zM571 82h1v6h-1zM572 82h1v6h-1zM573 85h1v3h-1zM574 82h1v6h-1zM575 82h1v6h-1zM576 82h1v6h-1zM577 82h1v6h-1zM578 82h1v6h-1zM579 85h1v3h-1zM580 82h1v6h-1zM581 82h1v6h-1zM582 82h1v6h-1zM583 82h1v9h-1zM584 82h1v6h-1zM585 82h1v3h-1zM586 79h1v6h-1zM587 79h1v6h-1zM588 82h1v3h-1zM589 79h1v6h-1zM590 79h1v6h-1zM591 82h1v6h-1zM592 82h1v6h-1zM593 85h1v6h-1zM594 87h1v6h-1zM595 85h1v8h-1zM596 87h1v6h-1zM597 87h1v6h-1zM598 87h1v6h-1zM599 87h1v6h-1zM600 87h1v6h-1zM601 85h1v6h-1zM602 82h1v6h-1zM603 82h1v9h-1zM604 82h1v6h-1zM605 82h1v6h-1zM606 82h1v6h-1zM607 79h1v6h-1zM608 77h1v8h-1zM609 77h1v6h-1zM610 77h1v11h-1zM611 77h1v6h-1zM612 77h1v8h-1zM613 77h1v6h-1zM614 77h1v6h-1zM615 77h1v6h-1zM616 77h1v6h-1zM617 77h1v6h-1zM618 77h1v6h-1zM619 77h1v6h-1zM620 77h1v6h-1zM621 77h1v6h-1zM622 77h1v6h-1zM623 77h1v6h-1zM624 77h1v8h-1zM625 79h1v6h-1zM626 79h1v6h-1zM627 82h1v6h-1zM628 82h1v6h-1zM629 82h1v6h-1zM630 82h1v6h-1zM631 82h1v3h-1zM632 82h1v3h-1zM633 79h1v6h-1zM634 82h1v6h-1zM635 82h1v6h-1zM636 82h1v6h-1zM637 85h1v6h-1zM638 85h1v3h-1zM639 85h1v8h-1zM640 85h1v3h-1zM641 82h1v3h-1zM642 82h1v3h-1zM643 82h1v6h-1zM644 82h1v3h-1zM645 79h1v6h-1zM646 79h1v6h-1zM647 79h1v6h-1zM648 79h1v6h-1zM649 74h1v9h-1zM650 79h1v6h-1zM651 79h1v6h-1zM652 79h1v6h-1zM653 79h1v6h-1zM654 82h1v3h-1zM655 79h1v6h-1zM656 79h1v6h-1zM657 82h1v6h-1zM658 82h1v6h-1zM659 82h1v6h-1zM660 79h1v9h-1zM661 82h1v6h-1zM662 82h1v6h-1zM663 82h1v9h-1zM664 82h1v6h-1zM665 82h1v6h-1zM666 82h1v9h-1zM667 79h1v9h-1zM668 77h1v6h-1zM669 77h1v6h-1zM670 77h1v6h-1zM671 77h1v6h-1zM672 77h1v6h-1zM673 77h1v6h-1zM674 77h1v6h-1zM675 77h1v6h-1zM676 79h1v4h-1zM677 79h1v4h-1zM678 77h1v6h-1zM679 79h1v4h-1zM680 77h1v6h-1zM681 74h1v9h-1zM682 74h1v9h-1zM683 79h1v6h-1zM684 79h1v6h-1zM685 79h1v6h-1zM686 79h1v6h-1zM687 77h1v8h-1zM688 77h1v8h-1zM689 77h1v6h-1zM690 79h1v6h-1zM691 79h1v4h-1zM692 79h1v4h-1zM693 79h1v6h-1zM694 79h1v6h-1zM695 79h1v4h-1zM696 79h1v4h-1zM697 79h1v6h-1zM698 79h1v6h-1zM699 79h1v6h-1zM700 79h1v4h-1zM701 79h1v6h-1zM702 79h1v6h-1zM703 77h1v8h-1zM704 79h1v6h-1zM705 79h1v4h-1zM706 79h1v4h-1zM707 79h1v6h-1zM708 79h1v4h-1zM709 77h1v6h-1zM710 77h1v6h-1zM711 77h1v6h-1zM712 77h1v6h-1zM713 79h1v4h-1zM714 77h1v6h-1zM715 79h1v4h-1zM716 77h1v6h-1zM717 79h1v4h-1zM718 79h1v4h-1zM719 77h1v8h-1zM720 79h1v4h-1zM721 79h1v6h-1zM722 79h1v6h-1zM723 77h1v6h-1zM724 79h1v4h-1zM725 79h1v4h-1zM726 77h1v6h-1zM727 77h1v6h-1zM728 79h1v6h-1zM729 79h1v4h-1zM730 79h1v4h-1zM731 79h1v4h-1zM732 79h1v4h-1zM733 77h1v6h-1zM734 77h1v6h-1zM735 79h1v6h-1zM736 79h1v4h-1zM737 77h1v8h-1zM738 79h1v6h-1zM739 79h1v4h-1zM740 79h1v6h-1zM741 79h1v6h-1zM742 77h1v6h-1zM743 77h1v6h-1zM744 77h1v8h-1zM745 77h1v6h-1zM746 77h1v6h-1zM747 77h1v6h-1zM748 74h1v6h-1zM749 74h1v6h-1zM750 77h1v3h-1zM751 77h1v6h-1zM752 77h1v3h-1zM753 77h1v6h-1zM754 77h1v6h-1zM755 77h1v6h-1zM756 77h1v6h-1zM757 79h1v6h-1zM758 79h1v6h-1zM759 82h1v6h-1zM760 82h1v6h-1zM761 82h1v6h-1zM762 79h1v6h-1zM763 79h1v6h-1zM764 79h1v6h-1zM765 79h1v6h-1zM766 79h1v9h-1zM767 79h1v4h-1zM768 79h1v6h-1zM769 77h1v8h-1zM770 79h1v9h-1zM771 79h1v6h-1zM772 79h1v6h-1zM773 77h1v8h-1zM774 82h1v3h-1zM775 79h1v6h-1zM776 82h1v6h-1zM777 82h1v6h-1zM778 82h1v6h-1zM779 82h1v3h-1zM780 82h1v3h-1zM781 79h1v6h-1zM782 79h1v6h-1zM783 79h1v6h-1zM784 77h1v8h-1zM785 79h1v6h-1zM786 82h1v3h-1zM787 79h1v9h-1zM788 82h1v3h-1zM789 82h1v3h-1zM790 82h1v3h-1zM791 82h1v3h-1zM792 79h1v6h-1zM793 79h1v4h-1zM794 79h1v6h-1zM795 79h1v6h-1zM796 79h1v4h-1zM797 77h1v6h-1zM798 79h1v4h-1zM799 79h1v4h-1zM800 79h1v6h-1zM801 79h1v4h-1zM802 77h1v6h-1zM803 79h1v6h-1zM804 79h1v6h-1zM805 82h1v3h-1zM806 79h1v6h-1zM807 82h1v3h-1zM808 79h1v6h-1zM809 79h1v9h-1zM810 79h1v6h-1zM811 79h1v6h-1zM812 79h1v6h-1zM813 79h1v6h-1zM814 79h1v6h-1zM815 77h1v8h-1zM816 79h1v9h-1zM817 79h1v6h-1zM818 79h1v4h-1zM819 79h1v6h-1zM820 82h1v6h-1zM821 82h1v3h-1zM822 79h1v6h-1zM823 82h1v6h-1zM824 82h1v3h-1zM825 77h1v8h-1zM826 82h1v3h-1zM827 79h1v6h-1zM828 79h1v4h-1zM829 79h1v4h-1zM830 79h1v4h-1zM831 77h1v6h-1zM832 79h1v4h-1zM833 77h1v6h-1zM834 77h1v8h-1zM835 77h1v6h-1zM836 77h1v6h-1zM837 77h1v6h-1zM838 79h1v6h-1zM839 79h1v6h-1zM840 77h1v8h-1zM841 79h1v4h-1zM842 79h1v6h-1zM843 77h1v6h-1zM844 79h1v6h-1zM845 79h1v6h-1zM846 79h1v6h-1zM847 79h1v6h-1zM848 79h1v6h-1zM849 79h1v6h-1zM850 77h1v8h-1zM851 79h1v6h-1zM852 79h1v6h-1zM853 79h1v4h-1zM854 79h1v6h-1zM855 79h1v4h-1zM856 79h1v4h-1zM857 79h1v6h-1zM858 79h1v6h-1zM859 82h1v3h-1zM860 79h1v6h-1zM861 82h1v3h-1zM862 82h1v6h-1zM863 82h1v3h-1zM864 79h1v6h-1zM865 82h1v3h-1zM866 79h1v4h-1zM867 79h1v6h-1zM868 79h1v4h-1zM869 77h1v6h-1zM870 79h1v4h-1zM871 77h1v6h-1zM872 77h1v8h-1zM873 77h1v6h-1zM874 77h1v6h-1zM875 77h1v6h-1zM876 77h1v6h-1zM877 77h1v8h-1zM878 77h1v6h-1zM879 77h1v6h-1zM880 77h1v6h-1zM881 79h1v4h-1zM882 79h1v6h-1zM883 79h1v4h-1zM884 77h1v6h-1zM885 77h1v6h-1zM886 77h1v8h-1zM887 77h1v6h-1zM888 77h1v6h-1zM889 79h1v4h-1zM890 77h1v6h-1zM891 77h1v6h-1zM892 77h1v6h-1zM893 77h1v6h-1zM894 77h1v6h-1zM895 77h1v6h-1zM896 79h1v6h-1zM897 79h1v6h-1zM898 77h1v6h-1zM899 77h1v6h-1zM900 77h1v6h-1zM901 77h1v6h-1zM902 74h1v9h-1zM903 77h1v6h-1zM904 77h1v6h-1zM905 77h1v6h-1zM906 77h1v6h-1zM907 77h1v6h-1zM908 77h1v6h-1zM909 77h1v6h-1zM910 77h1v6h-1zM911 74h1v9h-1zM912 77h1v6h-1zM913 79h1v4h-1zM914 77h1v6h-1zM915 79h1v6h-1zM916 77h1v8h-1zM917 79h1v6h-1zM918 79h1v6h-1zM919 79h1v6h-1zM920 79h1v6h-1zM921 79h1v6h-1zM922 79h1v6h-1zM923 79h1v6h-1zM924 77h1v6h-1zM925 77h1v6h-1zM926 79h1v6h-1zM927 79h1v4h-1zM928 77h1v6h-1zM929 79h1v6h-1zM930 79h1v4h-1zM931 77h1v6h-1zM932 77h1v6h-1zM933 77h1v6h-1zM934 77h1v6h-1zM935 77h1v6h-1zM936 79h1v6h-1zM937 79h1v4h-1zM938 79h1v4h-1zM939 79h1v9h-1zM940 79h1v6h-1zM941 79h1v6h-1zM942 79h1v6h-1zM943 79h1v6h-1zM944 79h1v6h-1zM945 79h1v6h-1zM946 79h1v6h-1zM947 77h1v6h-1zM948 79h1v4h-1zM949 77h1v8h-1zM950 77h1v6h-1zM951 77h1v6h-1zM952 77h1v6h-1zM953 77h1v6h-1zM954 77h1v6h-1zM955 79h1v6h-1zM956 79h1v6h-1zM957 77h1v8h-1zM958 79h1v6h-1zM959 77h1v8h-1zM960 77h1v6h-1zM961 77h1v6h-1zM962 74h1v6h-1zM963 77h1v6h-1zM964 77h1v6h-1zM965 77h1v8h-1zM966 77h1v6h-1zM967 77h1v6h-1zM968 77h1v6h-1zM969 77h1v6h-1zM970 77h1v6h-1zM971 77h1v6h-1zM972 77h1v6h-1zM973 77h1v6h-1zM974 77h1v6h-1zM975 77h1v6h-1zM976 77h1v6h-1zM977 77h1v3h-1zM978 77h1v6h-1zM979 74h1v9h-1zM980 77h1v6h-1zM981 77h1v6h-1zM982 79h1v6h-1zM983 79h1v6h-1zM984 79h1v4h-1zM985 79h1v4h-1zM986 79h1v4h-1zM987 79h1v6h-1zM988 79h1v6h-1zM989 79h1v6h-1zM990 79h1v6h-1zM991 79h1v9h-1zM992 79h1v4h-1zM993 79h1v4h-1zM994 79h1v9h-1zM995 79h1v6h-1zM996 77h1v8h-1zM997 79h1v6h-1zM998 77h1v6h-1zM999 79h1v4h-1zM1000 77h1v6h-1zM1001 77h1v6h-1zM1002 79h1v4h-1zM1003 79h1v4h-1zM1004 77h1v6h-1zM1005 79h1v6h-1zM1006 77h1v8h-1zM1007 79h1v4h-1zM1008 79h1v4h-1zM1009 79h1v6h-1zM1010 79h1v4h-1zM1011 77h1v6h-1zM1012 79h1v6h-1zM1013 79h1v6h-1zM1014 79h1v6h-1zM1015 77h1v6h-1zM1016 77h1v6h-1zM1017 77h1v6h-1zM1018 77h1v6h-1zM1019 79h1v4h-1zM1020 77h1v6h-1z" fill="#f000f0"/>
<path d="M21 607h1v4h-1zM22 604h1v7h-1zM23 604h1v10h-1zM24 604h1v7h-1zM25 607h1v7h-1zM26 604h1v7h-1zM27 607h1v4h-1zM28 607h1v4h-1zM29 607h1v4h-1zM30 607h1v4h-1zM31 607h1v4h-1zM32 607h1v4h-1zM33 607h1v7h-1zM34 607h1v4h-1zM35 607h1v9h-1zM36 607h1v7h-1zM37 607h1v4h-1zM38 607h1v4h-1zM39 607h1v7h-1zM40 607h1v7h-1zM41 607h1v7h-1zM42 607h1v7h-1zM43 610h1v4h-1zM44 607h1v7h-1zM45 610h1v4h-1zM46 607h1v7h-1zM47 607h1v4h-1zM48 607h1v4h-1zM49 607h1v4h-1zM50 607h1v9h-1zM51 610h1v4h-1zM52 610h1v4h-1zM53 610h1v4h-1zM54 607h1v7h-1zM55 607h1v7h-1zM56 607h1v7h-1zM57 607h1v4h-1zM58 607h1v4h-1zM59 607h1v7h-1zM60 607h1v4h-1zM61 604h1v7h-1zM62 607h1v7h-1zM63 607h1v7h-1zM64 607h1v4h-1zM65 604h1v7h-1zM66 604h1v7h-1zM67 607h1v4h-1zM68 607h1v4h-1zM69 602h1v9h-1zM70 607h1v4h-1zM71 604h1v7h-1zM72 604h1v7h-1zM73 607h1v4h-1zM74 607h1v4h-1zM75 607h1v4h-1zM76 604h1v7h-1zM77 607h1v4h-1zM78 604h1v7h-1zM79 604h1v7h-1zM80 607h1v4h-1zM81 607h1v4h-1zM82 607h1v4h-1zM83 607h1v4h-1zM84 607h1v4h-1zM85 607h1v4h-1zM86 604h1v7h-1zM87 604h1v7h-1zM88 604h1v7h-1zM89 607h1v4h-1zM90 604h1v7h-1zM91 607h1v7h-1zM92 604h1v7h-1zM93 607h1v4h-1zM94 604h1v7h-1zM95 604h1v7h-1zM96 607h1v4h-1zM97 604h1v4h-1zM98 607h1v4h-1zM99 604h1v7h-1zM100 607h1v4h-1zM101 607h1v4h-1zM102 607h1v4h-1zM103 607h1v4h-1zM104 607h1v4h-1zM105 607h1v4h-1zM106 604h1v7h-1zM107 607h1v4h-1zM108 607h1v4h-1zM109 607h1v4h-1zM110 607h1v4h-1zM111 607h1v4h-1zM112 607h1v4h-1zM113 607h1v4h-1zM114 604h1v7h-1zM115 607h1v4h-1zM116 607h1v4h-1zM117 607h1v7h-1zM118 607h1v4h-1zM119 607h1v4h-1zM120 607h1v4h-1zM121 604h1v7h-1zM122 604h1v7h-1zM123 607h1v4h-1zM124 607h1v7h-1zM125 607h1v4h-1zM126 607h1v9h-1zM127 607h1v4h-1zM128 607h1v7h-1zM129 604h1v7h-1zM130 604h1v7h-1zM131 604h1v7h-1zM132 607h1v4h-1zM133 607h1v4h-1zM134 607h1v4h-1zM135 607h1v4h-1zM136 607h1v4h-1zM137 607h1v4h-1zM138 607h1v4h-1zM139 604h1v7h-1zM140 604h1v7h-1zM141 607h1v4h-1zM142 604h1v7h-1zM143 604h1v7h-1zM144 604h1v7h-1zM145 607h1v4h-1zM146 607h1v4h-1zM147 604h1v7h-1zM148 604h1v7h-1zM149 607h1v4h-1zM150 604h1v7h-1zM151 607h1v4h-1zM152 607h1v4h-1zM153 607h1v7h-1zM154 607h1v4h-1zM155 607h1v4h-1zM156 607h1v7h-1zM157 607h1v4h-1zM158 607h1v4h-1zM159 607h1v7h-1zM160 607h1v4h-1zM161 604h1v10h-1zM162 607h1v4h-1zM163 607h1v4h-1zM164 604h1v7h-1zM165 607h1v4h-1zM166 607h1v7h-1zM167 604h1v7h-1zM168 604h1v7h-1zM169 607h1v7h-1zM170 607h1v4h-1zM171 607h1v4h-1zM172 604h1v7h-1zM173 604h1v7h-1zM174 607h1v4h-1zM175 604h1v10h-1zM176 604h1v7h-1zM177 607h1v4h-1zM178 607h1v7h-1zM179 607h1v4h-1zM180 607h1v4h-1zM181 604h1v7h-1zM182 607h1v4h-1zM183 607h1v4h-1zM184 607h1v4h-1zM185 607h1v7h-1zM186 607h1v7h-1zM187 607h1v4h-1zM188 607h1v7h-1zM189 607h1v7h-1zM190 607h1v7h-1zM191 607h1v7h-1zM192 607h1v7h-1zM193 607h1v7h-1zM194 607h1v4h-1zM195 607h1v4h-1zM196 607h1v4h-1zM197 607h1v7h-1zM198 607h1v4h-1zM199 607h1v4h-1zM200 607h1v7h-1zM201 607h1v4h-1zM202 607h1v4h-1zM203 607h1v4h-1zM204 607h1v4h-1zM205 607h1v4h-1zM206 607h1v4h-1zM207 607h1v4h-1zM208 604h1v7h-1zM209 604h1v10h-1zM210 604h1v7h-1zM211 604h1v7h-1zM212 607h1v4h-1zM213 607h1v4h-1zM214 607h1v4h-1zM215 607h1v4h-1zM216 607h1v4h-1zM217 602h1v6h-1zM218 604h1v7h-1zM219 604h1v7h-1zM220 607h1v4h-1zM221 607h1v7h-1zM222 604h1v7h-1zM223 607h1v4h-1zM224 604h1v7h-1zM225 607h1v7h-1zM226 604h1v10h-1zM227 604h1v7h-1zM228 604h1v7h-1zM229 607h1v4h-1zM230 604h1v7h-1zM231 607h1v4h-1zM232 607h1v4h-1zM233 607h1v4h-1zM234 607h1v4h-1zM235 604h1v7h-1zM236 607h1v4h-1zM237 607h1v4h-1zM238 607h1v4h-1zM239 607h1v4h-1zM240 604h1v7h-1zM241 607h1v4h-1zM242 607h1v4h-1zM243 607h1v7h-1zM244 604h1v7h-1zM245 607h1v4h-1zM246 607h1v4h-1zM247 607h1v4h-1zM248 607h1v4h-1zM249 607h1v7h-1zM250 607h1v7h-1zM251 607h1v7h-1zM252 607h1v7h-1zM253 607h1v7h-1zM254 607h1v4h-1zM255 607h1v4h-1zM256 607h1v4h-1zM257 607h1v7h-1zM258 607h1v4h-1zM259 607h1v7h-1zM260 604h1v7h-1zM261 607h1v4h-1zM262 604h1v7h-1zM263 607h1v7h-1zM264 607h1v4h-1zM265 607h1v4h-1zM266 607h1v4h-1zM267 607h1v4h-1zM268 604h1v7h-1zM269 607h1v4h-1zM270 604h1v7h-1zM271 604h1v7h-1zM272 607h1v4h-1zM273 604h1v7h-1zM274 604h1v7h-1zM275 604h1v7h-1zM276 602h1v9h-1zM277 604h1v7h-1zM278 607h1v4h-1zM279 607h1v4h-1zM280 607h1v4h-1zM281 607h1v4h-1zM282 607h1v4h-1zM283 607h1v4h-1zM284 604h1v7h-1zM285 607h1v4h-1zM286 607h1v7h-1zM287 607h1v7h-1zM288 607h1v4h-1zM289 607h1v4h-1zM290 607h1v4h-1zM291 604h1v7h-1zM292 607h1v7h-1zM293 607h1v7h-1zM294 604h1v7h-1zM295 607h1v4h-1zM296 607h1v4h-1zM297 607h1v4h-1zM298 604h1v7h-1zM299 607h1v4h-1zM300 604h1v7h-1zM301 607h1v7h-1zM302 607h1v7h-1zM303 607h1v4h-1zM304 607h1v7h-1zM305 607h1v4h-1zM306 607h1v4h-1zM307 607h1v4h-1zM308 604h1v7h-1zM309 607h1v4h-1zM310 607h1v4h-1zM311 607h1v4h-1zM312 607h1v4h-1zM313 602h1v9h-1zM314 607h1v4h-1zM315 607h1v4h-1zM316 607h1v4h-1zM317 607h1v4h-1zM318 607h1v4h-1zM319 607h1v9h-1zM320 607h1v4h-1zM321 607h1v7h-1zM322 607h1v7h-1zM323 604h1v7h-1zM324 607h1v9h-1zM325 604h1v7h-1zM326 607h1v4h-1zM327 607h1v4h-1zM328 607h1v4h-1zM329 607h1v7h-1zM330 607h1v4h-1zM331 607h1v7h-1zM332 607h1v4h-1zM333 607h1v4h-1zM334 607h1v7h-1zM335 607h1v4h-1zM336 604h1v7h-1zM337 607h1v4h-1zM338 607h1v4h-1zM339 607h1v4h-1zM340 607h1v4h-1zM341 607h1v7h-1zM342 607h1v4h-1zM343 604h1v7h-1zM344 604h1v7h-1zM345 607h1v4h-1zM346 607h1v4h-1zM347 607h1v4h-1zM348 607h1v7h-1zM349 604h1v7h-1zM350 607h1v4h-1zM351 607h1v4h-1zM352 607h1v4h-1zM353 607h1v4h-1zM354 607h1v4h-1zM355 607h1v4h-1zM356 607h1v4h-1zM357 607h1v7h-1zM358 607h1v4h-1zM359 604h1v7h-1zM360 607h1v4h-1zM361 604h1v7h-1zM362 607h1v4h-1zM363 607h1v4h-1zM364 607h1v4h-1zM365 607h1v4h-1zM366 607h1v4h-1zM367 607h1v7h-1zM368 607h1v4h-1zM369 607h1v4h-1zM370 607h1v4h-1zM371 607h1v4h-1zM372 607h1v4h-1zM373 607h1v4h-1zM374 607h1v4h-1zM375 607h1v7h-1zM376 607h1v7h-1zM377 607h1v7h-1zM378 607h1v9h-1zM379 607h1v9h-1zM380 607h1v7h-1zM381 607h1v7h-1zM382 607h1v4h-1zM383 607h1v4h-1zM384 607h1v4h-1zM385 604h1v7h-1zM386 604h1v7h-1zM387 604h1v7h-1zM388 607h1v7h-1zM389 604h1v7h-1zM390 604h1v7h-1zM391 607h1v4h-1zM392 604h1v7h-1zM393 607h1v4h-1zM394 607h1v4h-1zM395 604h1v7h-1zM396 604h1v10h-1zM397 607h1v4h-1zM398 604h1v7h-1zM399 607h1v4h-1zM400 604h1v7h-1zM401 604h1v7h-1zM402 607h1v4h-1zM403 607h1v4h-1zM404 607h1v4h-1zM405 604h1v7h-1zM406 607h1v4h-1zM407 607h1v7h-1zM408 607h1v4h-1zM409 607h1v4h-1zM410 607h1v4h-1zM411 607h1v4h-1zM412 607h1v7h-1zM413 607h1v4h-1zM414 607h1v4h-1zM415 607h1v4h-1zM416 604h1v7h-1zM417 607h1v4h-1zM418 607h1v4h-1zM419 607h1v4h-1zM420 607h1v4h-1zM421 607h1v4h-1zM422 607h1v4h-1zM423 607h1v4h-1zM424 607h1v7h-1zM425 607h1v4h-1zM426 607h1v9h-1zM427 607h1v4h-1zM428 607h1v4h-1zM429 604h1v7h-1zM430 607h1v4h-1zM431 607h1v4h-1zM432 607h1v4h-1zM433 604h1v7h-1zM434 607h1v4h-1zM435 604h1v10h-1zM436 607h1v4h-1zM437 607h1v7h-1zM438 602h1v9h-1zM439 607h1v4h-1zM440 607h1v7h-1zM441 607h1v7h-1zM442 607h1v4h-1zM443 607h1v4h-1zM444 607h1v7h-1zM445 607h1v9h-1zM446 607h1v4h-1zM447 604h1v7h-1zM448 607h1v4h-1zM449 607h1v4h-1zM450 607h1v4h-1zM451 604h1v7h-1zM452 607h1v7h-1zM453 607h1v4h-1zM454 607h1v4h-1zM455 607h1v4h-1zM456 607h1v4h-1zM457 604h1v7h-1zM458 607h1v4h-1zM459 607h1v4h-1zM460 604h1v7h-1zM461 607h1v4h-1zM462 607h1v4h-1zM463 607h1v4h-1zM464 607h1v4h-1zM465 607h1v7h-1zM466 607h1v4h-1zM467 607h1v4h-1zM468 604h1v7h-1zM469 604h1v7h-1zM470 604h1v7h-1zM471 607h1v4h-1zM472 607h1v4h-1zM473 604h1v7h-1zM474 607h1v4h-1zM475 607h1v4h-1zM476 607h1v4h-1zM477 604h1v7h-1zM478 607h1v4h-1zM479 607h1v7h-1zM480 607h1v4h-1zM481 607h1v4h-1zM482 607h1v7h-1zM483 607h1v4h-1zM484 607h1v9h-1zM485 607h1v7h-1zM486 607h1v4h-1zM487 607h1v4h-1zM488 607h1v4h-1zM489 607h1v4h-1zM490 607h1v7h-1zM491 607h1v7h-1zM492 607h1v7h-1zM493 607h1v7h-1zM494 607h1v7h-1zM495 607h1v4h-1zM496 607h1v4h-1zM497 607h1v4h-1zM498 607h1v4h-1zM499 604h1v7h-1zM500 602h1v9h-1zM501 604h1v4h-1zM502 604h1v7h-1zM503 604h1v7h-1zM504 607h1v4h-1zM505 604h1v7h-1zM506 604h1v7h-1zM507 604h1v7h-1zM508 604h1v7h-1zM509 604h1v7h-1zM510 604h1v4h-1zM511 602h1v6h-1zM512 599h1v7h-1zM513 597h1v9h-1zM514 597h1v6h-1zM515 596h1v4h-1zM516 594h1v4h-1zM517 591h1v5h-1zM518 587h1v5h-1zM519 583h1v6h-1zM520 579h1v6h-1zM521 574h1v7h-1zM522 567h1v9h-1zM523 559h1v9h-1zM524 551h1v10h-1zM525 543h1v10h-1zM526 535h1v10h-1zM527 527h1v10h-1zM528 520h1v9h-1zM529 512h1v9h-1zM530 504h1v10h-1zM531 497h1v9h-1zM532 489h1v9h-1zM533 481h1v10h-1zM534 474h1v9h-1zM535 466h1v10h-1zM536 459h1v9h-1zM537 451h1v9h-1zM538 444h1v9h-1zM539 437h1v9h-1zM540 430h1v9h-1zM541 425h1v7h-1zM542 420h1v6h-1zM543 415h1v6h-1zM544 410h1v7h-1zM545 406h1v6h-1zM546 403h1v5h-1zM547 399h1v5h-1zM548 396h1v5h-1zM549 393h1v5h-1zM550 391h1v4h-1zM551 388h1v4h-1zM552 383h1v10h-1zM553 383h1v4h-1zM554 381h1v6h-1zM555 378h1v7h-1zM556 378h1v7h-1zM557 378h1v7h-1zM558 376h1v6h-1zM559 378h1v4h-1zM560 376h1v6h-1zM561 378h1v7h-1zM562 376h1v4h-1zM563 376h1v4h-1zM564 376h1v6h-1zM565 376h1v6h-1zM566 376h1v6h-1zM567 378h1v7h-1zM568 381h1v4h-1zM569 381h1v4h-1zM570 381h1v6h-1zM571 381h1v6h-1zM572 381h1v9h-1zM573 383h1v10h-1zM574 386h1v7h-1zM575 386h1v7h-1zM576 389h1v9h-1zM577 391h1v12h-1zM578 394h1v6h-1zM579 396h1v7h-1zM580 399h1v7h-1zM581 399h1v9h-1zM582 402h1v6h-1zM583 402h1v9h-1zM584 404h1v9h-1zM585 407h1v6h-1zM586 409h1v7h-1zM587 412h1v7h-1zM588 412h1v7h-1zM589 415h1v6h-1zM590 417h1v7h-1zM591 417h1v9h-1zM592 420h1v6h-1zM593 422h1v7h-1zM594 425h1v4h-1zM595 425h1v7h-1zM596 425h1v9h-1zM597 428h1v9h-1zM598 430h1v7h-1zM599 433h1v6h-1zM600 433h1v6h-1zM601 435h1v7h-1zM602 435h1v10h-1zM603 441h1v6h-1zM604 441h1v9h-1zM605 443h1v9h-1zM606 446h1v6h-1zM607 448h1v7h-1zM608 448h1v7h-1zM609 451h1v7h-1zM610 454h1v6h-1zM611 454h1v6h-1zM612 456h1v7h-1zM613 456h1v9h-1zM614 456h1v9h-1zM615 461h1v7h-1zM616 464h1v7h-1zM617 464h1v7h-1zM618 464h1v7h-1zM619 467h1v6h-1zM620 469h1v7h-1zM621 469h1v7h-1zM622 472h1v6h-1zM623 474h1v7h-1zM624 474h1v7h-1zM625 477h1v7h-1zM626 474h1v10h-1zM627 480h1v6h-1zM628 480h1v9h-1zM629 482h1v7h-1zM630 482h1v7h-1zM631 485h1v6h-1zM632 485h1v6h-1zM633 487h1v10h-1zM634 490h1v9h-1zM635 490h1v7h-1zM636 487h1v10h-1zM637 493h1v4h-1zM638 493h1v6h-1zM639 493h1v9h-1zM640 495h1v7h-1zM641 495h1v7h-1zM642 495h1v7h-1zM643 498h1v6h-1zM644 498h1v6h-1zM645 498h1v9h-1zM646 500h1v7h-1zM647 503h1v4h-1zM648 503h1v7h-1zM649 503h1v7h-1zM650 506h1v6h-1zM651 506h1v6h-1zM652 508h1v4h-1zM653 508h1v7h-1zM654 508h1v7h-1zM655 511h1v4h-1zM656 511h1v6h-1zM657 511h1v6h-1zM658 511h1v6h-1zM659 511h1v6h-1zM660 513h1v4h-1zM661 513h1v4h-1zM662 511h1v9h-1zM663 513h1v7h-1zM664 516h1v7h-1zM665 516h1v7h-1zM666 519h1v4h-1zM667 519h1v6h-1zM668 519h1v6h-1zM669 519h1v6h-1zM670 519h1v6h-1zM671 521h1v7h-1zM672 521h1v7h-1zM673 524h1v4h-1zM674 521h1v7h-1zM675 524h1v6h-1zM676 524h1v9h-1zM677 524h1v6h-1zM678 521h1v9h-1zM679 524h1v9h-1zM680 526h1v7h-1zM681 529h1v7h-1zM682 529h1v9h-1zM683 529h1v7h-1zM684 529h1v7h-1zM685 529h1v7h-1zM686 532h1v6h-1zM687 532h1v6h-1zM688 532h1v6h-1zM689 534h1v4h-1zM690 534h1v4h-1zM691 534h1v7h-1zM692 534h1v7h-1zM693 537h1v4h-1zM694 537h1v6h-1zM695 537h1v6h-1zM696 539h1v4h-1zM697 539h1v4h-1zM698 539h1v4h-1zM699 539h1v7h-1zM700 539h1v4h-1zM701 539h1v7h-1zM702 539h1v7h-1zM703 539h1v10h-1zM704 539h1v7h-1zM705 542h1v7h-1zM706 542h1v7h-1zM707 542h1v7h-1zM708 542h1v7h-1zM709 542h1v7h-1zM710 545h1v9h-1zM711 547h1v4h-1zM712 545h1v6h-1zM713 545h1v6h-1zM714 545h1v6h-1zM715 547h1v4h-1zM716 545h1v6h-1zM717 545h1v6h-1zM718 547h1v4h-1zM719 547h1v4h-1zM720 550h1v4h-1zM721 547h1v7h-1zM722 550h1v4h-1zM723 550h1v4h-1zM724 547h1v7h-1zM725 550h1v6h-1zM726 550h1v4h-1zM727 550h1v4h-1zM728 550h1v6h-1zM729 552h1v7h-1zM730 552h1v4h-1zM731 552h1v4h-1zM732 552h1v4h-1zM733 552h1v4h-1zM734 552h1v4h-1zM735 552h1v7h-1zM736 552h1v7h-1zM737 555h1v4h-1zM738 552h1v7h-1zM739 555h1v7h-1zM740 555h1v7h-1zM741 552h1v7h-1zM742 555h1v9h-1zM743 555h1v7h-1zM744 555h1v7h-1zM745 555h1v7h-1zM746 558h1v4h-1zM747 558h1v4h-1zM748 555h1v7h-1zM749 558h1v6h-1zM750 558h1v4h-1zM751 558h1v6h-1zM752 555h1v9h-1zM753 558h1v6h-1zM754 558h1v6h-1zM755 558h1v6h-1zM756 558h1v6h-1zM757 560h1v4h-1zM758 558h1v6h-1zM759 560h1v4h-1zM760 563h1v4h-1zM761 560h1v7h-1zM762 558h1v9h-1zM763 563h1v6h-1zM764 563h1v4h-1zM765 563h1v4h-1zM766 560h1v7h-1zM767 563h1v4h-1zM768 563h1v4h-1zM769 563h1v6h-1zM770 563h1v4h-1zM771 563h1v6h-1zM772 563h1v9h-1zM773 563h1v6h-1zM774 565h1v4h-1zM775 565h1v4h-1zM776 563h1v6h-1zM777 565h1v4h-1zM778 565h1v4h-1zM779 565h1v4h-1zM780 565h1v4h-1zM781 565h1v4h-1zM782 565h1v4h-1zM783 565h1v7h-1zM784 565h1v7h-1zM785 565h1v7h-1zM786 565h1v7h-1zM787 563h1v9h-1zM788 568h1v4h-1zM789 568h1v4h-1zM790 568h1v4h-1zM791 568h1v7h-1zM792 565h1v10h-1zM793 565h1v10h-1zM794 568h1v7h-1zM795 568h1v7h-1zM796 568h1v7h-1zM797 568h1v7h-1zM798 571h1v4h-1zM799 571h1v4h-1zM800 568h1v7h-1zM801 571h1v4h-1zM802 571h1v6h-1zM803 571h1v6h-1zM804 571h1v6h-1zM805 573h1v7h-1zM806 571h1v6h-1zM807 571h1v6h-1zM808 571h1v6h-1zM809 571h1v6h-1zM810 568h1v9h-1zM811 573h1v4h-1zM812 571h1v6h-1zM813 571h1v6h-1zM814 571h1v6h-1zM815 573h1v7h-1zM816 573h1v7h-1zM817 573h1v7h-1zM818 573h1v7h-1zM819 573h1v7h-1zM820 576h1v4h-1zM821 573h1v7h-1zM822 576h1v6h-1zM823 576h1v4h-1zM824 576h1v4h-1zM825 576h1v4h-1zM826 576h1v4h-1zM827 576h1v4h-1zM828 573h1v9h-1zM829 573h1v7h-1zM830 573h1v7h-1zM831 573h1v7h-1zM832 576h1v6h-1zM833 576h1v4h-1zM834 576h1v6h-1zM835 576h1v6h-1zM836 576h1v4h-1zM837 576h1v6h-1zM838 576h1v6h-1zM839 576h1v6h-1zM840 576h1v6h-1zM841 576h1v6h-1zM842 576h1v9h-1zM843 576h1v6h-1zM844 576h1v6h-1zM845 576h1v6h-1zM846 578h1v4h-1zM847 576h1v6h-1zM848 576h1v6h-1zM849 578h1v4h-1zM850 578h1v7h-1zM851 578h1v7h-1zM852 581h1v7h-1zM853 581h1v4h-1zM854 581h1v4h-1zM855 581h1v7h-1zM856 578h1v7h-1zM857 578h1v7h-1zM858 578h1v7h-1zM859 581h1v4h-1zM860 581h1v4h-1zM861 581h1v4h-1zM862 578h1v7h-1zM863 581h1v4h-1zM864 581h1v4h-1zM865 581h1v4h-1zM866 578h1v10h-1zM867 581h1v7h-1zM868 584h1v4h-1zM869 581h1v7h-1zM870 584h1v4h-1zM871 584h1v4h-1zM872 584h1v4h-1zM873 581h1v7h-1zM874 584h1v4h-1zM875 581h1v7h-1zM876 584h1v4h-1zM877 584h1v4h-1zM878 584h1v6h-1zM879 584h1v4h-1zM880 584h1v6h-1zM881 584h1v6h-1zM882 584h1v6h-1zM883 584h1v6h-1zM884 584h1v6h-1zM885 586h1v7h-1zM886 586h1v7h-1zM887 586h1v4h-1zM888 586h1v4h-1zM889 581h1v7h-1zM890 584h1v6h-1zM891 584h1v6h-1zM892 584h1v6h-1zM893 586h1v4h-1zM894 586h1v7h-1zM895 584h1v9h-1zM896 586h1v7h-1zM897 586h1v7h-1zM898 586h1v7h-1zM899 586h1v7h-1zM900 586h1v4h-1zM901 584h1v6h-1zM902 586h1v4h-1zM903 586h1v4h-1zM904 586h1v9h-1zM905 586h1v7h-1zM906 586h1v7h-1zM907 589h1v4h-1zM908 589h1v4h-1zM909 589h1v6h-1zM910 589h1v6h-1zM911 589h1v4h-1zM912 589h1v4h-1zM913 586h1v7h-1zM914 589h1v4h-1zM915 586h1v7h-1zM916 589h1v6h-1zM917 589h1v6h-1zM918 589h1v6h-1zM919 591h1v4h-1zM920 591h1v4h-1zM921 591h1v4h-1zM922 591h1v4h-1zM923 591h1v4h-1zM924 591h1v4h-1zM925 589h1v6h-1zM926 591h1v4h-1zM927 591h1v4h-1zM928 591h1v4h-1zM929 591h1v7h-1zM930 591h1v4h-1zM931 591h1v4h-1zM932 591h1v4h-1zM933 589h1v6h-1zM934 591h1v4h-1zM935 589h1v6h-1zM936 591h1v4h-1zM937 591h1v4h-1zM938 591h1v4h-1zM939 586h1v9h-1zM940 591h1v4h-1zM941 589h1v6h-1zM942 586h1v9h-1zM943 591h1v4h-1zM944 591h1v4h-1zM945 591h1v4h-1zM946 591h1v7h-1zM947 591h1v4h-1zM948 591h1v7h-1zM949 591h1v7h-1zM950 591h1v7h-1zM951 591h1v10h-1zM952 591h1v4h-1zM953 591h1v7h-1zM954 594h1v4h-1zM955 594h1v4h-1zM956 594h1v4h-1zM957 591h1v7h-1zM958 591h1v7h-1zM959 591h1v10h-1zM960 594h1v4h-1zM961 594h1v4h-1zM962 594h1v4h-1zM963 594h1v7h-1zM964 594h1v7h-1zM965 594h1v7h-1zM966 594h1v4h-1zM967 594h1v7h-1zM968 594h1v4h-1zM969 591h1v10h-1zM970 594h1v7h-1zM971 591h1v10h-1zM972 594h1v7h-1zM973 597h1v6h-1zM974 594h1v7h-1zM975 597h1v4h-1zM976 597h1v6h-1zM977 594h1v9h-1zM978 594h1v9h-1zM979 597h1v6h-1zM980 597h1v4h-1zM981 591h1v10h-1zM982 594h1v7h-1zM983 594h1v7h-1zM984 597h1v4h-1zM985 597h1v6h-1zM986 597h1v9h-1zM987 597h1v4h-1zM988 597h1v4h-1zM989 597h1v4h-1zM990 597h1v6h-1zM991 597h1v4h-1zM992 597h1v4h-1zM993 594h1v7h-1zM994 594h1v7h-1zM995 597h1v4h-1zM996 597h1v4h-1zM997 597h1v4h-1zM998 597h1v4h-1zM999 597h1v6h-1zM1000 594h1v7h-1zM1001 594h1v7h-1zM1002 597h1v6h-1zM1003 597h1v4h-1zM1004 594h1v7h-1zM1005 591h1v10h-1zM1006 597h1v4h-1zM1007 597h1v4h-1zM1008 597h1v4h-1zM1009 597h1v4h-1zM1010 597h1v4h-1zM1011 597h1v4h-1zM1012 597h1v4h-1zM1013 597h1v9h-1zM1014 597h1v4h-1zM1015 594h1v7h-1zM1016 597h1v4h-1zM1017 597h1v6h-1zM1018 597h1v4h-1zM1019 597h1v6h-1zM1020 597h1v9h-1z" fill="#00ecec"/>
</g>
<!-- trigger position marker (top) -->
<g shape-rendering="crispEdges">
<path d="M518 1h8l-4 4.5z" fill="#ff9a00"/>
<path d="M518 5h6l1 1v8l-1 2h-6l-1-2v-8z" fill="#ff9a00"/>
<rect x="518" y="6" width="7" height="1" fill="#7a4a00"/>
<rect x="520" y="1" width="2" height="14" fill="#fff"/>
<path d="M516 17h11l-5.5 6z" fill="#ff9a00"/>
<path d="M516 24h10l1 1v11l-6 3.5l-6-3.5v-11z" fill="#ff9a00"/>
</g>
<!-- channel markers -->
<path d="M0 74H12.500l7.200 7.500l-7.200 7.500H0z" fill="#000" stroke="#f552f5" stroke-width="2"/>
<path d="M2 599H13l7.500 8.500l-7.500 8.500H2q-2 0-2-2v-13q0-2 2-2z" fill="#00e4e4"/>
<path d="M2 614h11l7-6.500v1l-7 7.500h-11z" fill="#009c9c"/>
</svg>
<div class="t" style="left:0px;top:-5px;font-family:'Liberation Serif','DejaVu Serif',serif;font-weight:bold;font-size:20px;line-height:24px;height:24px;letter-spacing:-.6px;color:#fff;-webkit-text-stroke:0">Tek</div>
<div class="t" style="left:35.3px;top:-1px;letter-spacing:1px">Run</div>
<div class="t" style="left:925px;top:-1px;letter-spacing:.95px;font-kerning:none">Trig?</div>
<div class="t" style="left:0px;top:72px;width:15px;text-align:center;color:#c800c8;font-size:15px;-webkit-text-stroke:0">3</div>
<div class="t" style="left:0px;top:598px;width:15px;text-align:center;color:#000;font-size:15px;-webkit-text-stroke:.7px">2</div>
<div class="t" style="left:515.3px;top:21px;width:12px;text-align:center;color:#000;font-weight:bold;font-size:15.5px;-webkit-text-stroke:0">T</div>
<div class="box" style="left:20px;top:670px;width:556px;height:21px"></div>
<div class="pill" style="left:165px;top:673px;width:25px;background:#00e8e8">2</div>
<svg width="9" height="13" style="position:absolute;left:196px;top:675px"><path d="M4.500 .5v9" stroke="#00ecec" stroke-width="1.500" fill="none"/><path d="M1 6.800h7l-3.500 4.700z" fill="#00ecec"/></svg>
<div class="t" style="left:207.5px;top:672px;color:#00ecec;letter-spacing:.7px">100mV</div>
<div class="t" style="left:269px;top:672px;color:#00ecec;font-size:15px">Ω</div>
<div class="bw" style="left:282.300px;top:675px;color:#00ecec">B</div><div class="bw" style="left:286px;top:679px;font-size:7.800px;color:#00ecec">W</div>
<div class="pill" style="left:304px;top:673px;width:25px;background:#aa00aa">3</div>
<div class="t" style="left:346.5px;top:672px;color:#b000b4;letter-spacing:.95px">10.0mV</div>
<div class="t" style="left:408.5px;top:672px;color:#b000b4;font-size:15px">Ω</div>
<div class="bw" style="left:421.300px;top:675px;color:#b000b4">B</div><div class="bw" style="left:425px;top:679px;font-size:7.800px;color:#b000b4">W</div>
<div class="box" style="left:582px;top:670px;width:149px;height:39px"></div>
<div class="t" style="left:588px;top:672px;letter-spacing:1.05px">200ns</div>
<div style="position:absolute;left:587px;top:691px;width:12px;height:13px;background:#ff9a00;border-radius:3px 3px 2px 2px;color:#000;font-weight:bold;font-size:14px;line-height:15px;text-align:center;overflow:hidden">T</div>
<svg width="22" height="9" style="position:absolute;left:600px;top:693px"><path d="M0 4.500h6" stroke="#ff9a00" stroke-width="1.500" fill="none"/><path d="M5 1l4.500 3.500l-4.500 3.500zM10 1h11.500l-5.750 6.500z" fill="#ff9a00"/></svg>
<div class="t" style="left:622.5px;top:689px;color:#ff9a00;letter-spacing:.62px">0.000000 s</div>
<div class="box" style="left:737px;top:670px;width:107px;height:39px"></div>
<div class="t" style="left:743px;top:672px;letter-spacing:1px">2.50GS/s</div>
<div class="t" style="left:743px;top:689px;letter-spacing:1.15px">1M points</div>
<div class="box" style="left:851px;top:670px;width:171px;height:39px"></div>
<div class="pill" style="left:882px;top:673px;width:25px;background:#00a400;-webkit-text-stroke:.15px">4</div>
<svg width="14" height="12" style="position:absolute;left:919px;top:675px"><path d="M1 10.500h4l3.500-9h4" fill="none" stroke="#f0f0f8" stroke-width="1.600"/></svg>
<div class="t" style="left:965px;top:672px;letter-spacing:.6px">3.50 V</div>
<div class="btn" style="left:20px"><span style="letter-spacing:0.4px;position:relative;left:0.00px">Save</span><br><span style="letter-spacing:0.45px;position:relative;left:-0.07px">Screen Image</span></div>
<div class="btn" style="left:138px"><span style="letter-spacing:0.4px;position:relative;left:0.20px">Save</span><br><span style="letter-spacing:0.8px;position:relative;left:0.80px">Waveform</span></div>
<div class="btn" style="left:256px"><span style="letter-spacing:0.4px;position:relative;left:0.20px">Save</span><br><span style="letter-spacing:1.25px;position:relative;left:1.32px">Setup</span></div>
<div class="btn" style="left:374px"><span style="letter-spacing:0.4px;position:relative;left:1.20px">Recall</span><br><span style="letter-spacing:0.8px;position:relative;left:0.70px">Waveform</span></div>
<div class="btn" style="left:492px"><span style="letter-spacing:0.4px;position:relative;left:0.90px">Recall</span><br><span style="letter-spacing:1.25px;position:relative;left:1.32px">Setup</span></div>
<div class="btn" style="left:610px;padding-top:0px"><span style="letter-spacing:1.05px;position:relative;left:1.23px">Assign</span><br><span style="display:inline-block;vertical-align:top;background:linear-gradient(#fff,#f4f4f4 70%,#d0d0d0);color:#000;font:bold 10.500px/15px 'Liberation Sans',sans-serif;letter-spacing:0;border-radius:7px 2px 2px 7px;width:33px;height:14px;border-right:2px solid #8c8c8c;border-bottom:1px solid #8c8c8c;margin-left:-1px">Save</span><span style="display:inline-block;width:22.500px;text-align:right">to</span><br><span style="display:inline-block;background:#0a6cff;width:52px;height:16px;line-height:17px;vertical-align:top;">Image</span></div>
<div class="btn" style="left:728px"><span style="letter-spacing:1.1px;position:relative;left:0.25px">File</span><br><span style="letter-spacing:1.05px;position:relative;left:0.73px">Utilities</span></div>
<div class="box" style="left:909px;top:729px;width:113px;height:37px;background:#000"></div>
<div class="t" style="left:925px;top:732px;letter-spacing:1.6px">6 Jun 2023</div>
<div class="t" style="left:915px;top:748px;letter-spacing:.9px">12:33:20</div>
</div></body></html>
